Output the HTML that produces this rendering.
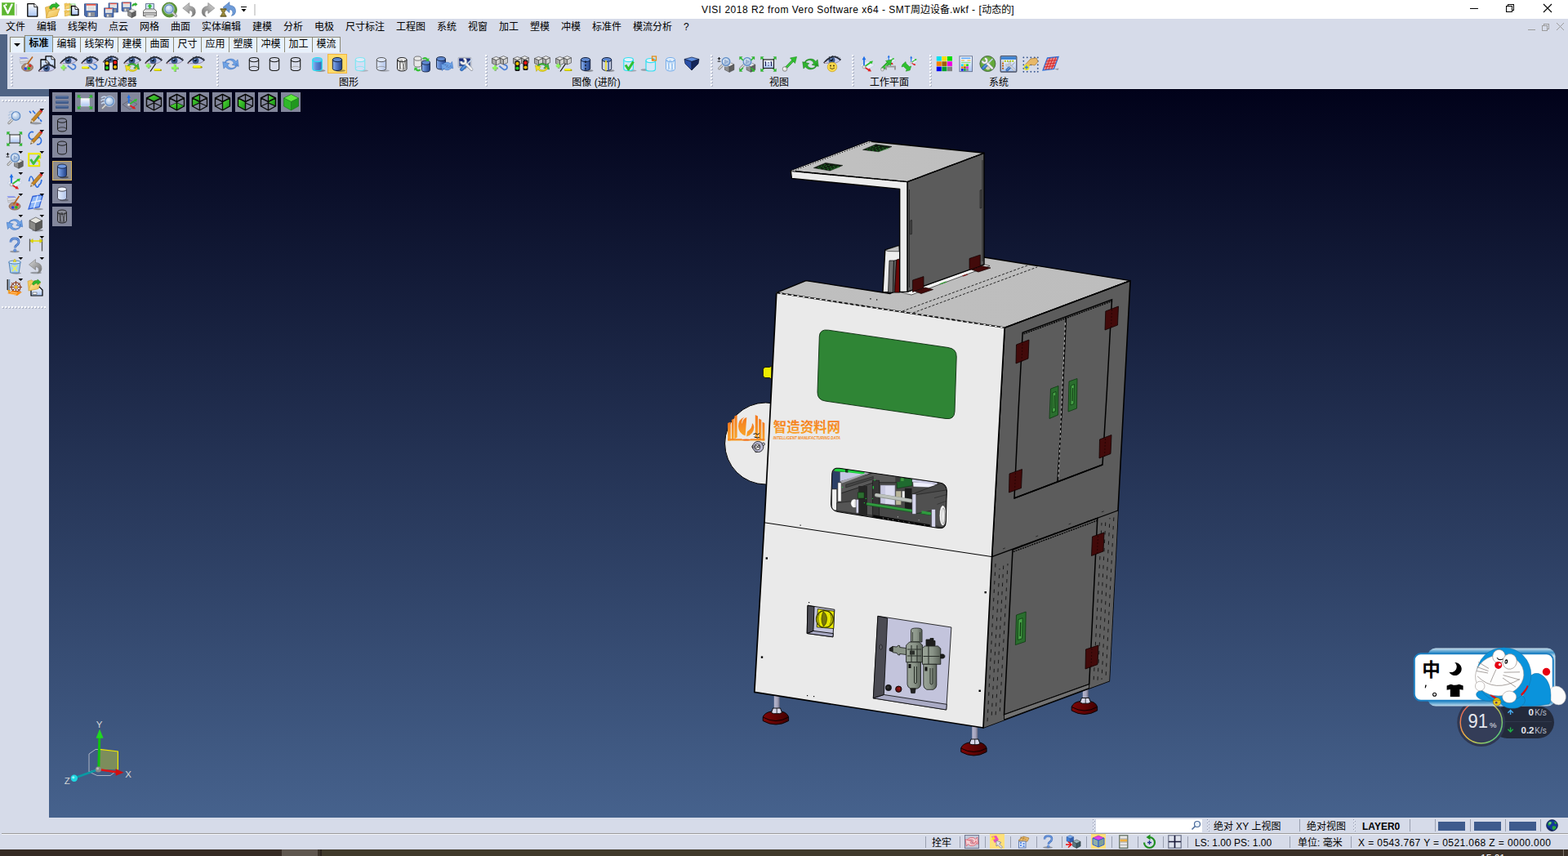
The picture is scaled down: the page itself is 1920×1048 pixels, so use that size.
<!DOCTYPE html><html><head><meta charset="utf-8"><title>VISI 2018 R2</title><style>
*{margin:0;padding:0;box-sizing:border-box}
html,body{width:1920px;height:1048px;overflow:hidden;background:#d6dbe9}
body{position:relative;font-family:"Liberation Sans","Noto Sans CJK SC",sans-serif;font-size:12px;color:#000}
.a{position:absolute}
.t{position:absolute;white-space:nowrap;line-height:14px;height:14px}
.c{text-align:center}
.k{display:inline-block;position:relative;vertical-align:top;white-space:nowrap}
svg{position:absolute;overflow:visible}
.grip{position:absolute;width:3px;background:repeating-linear-gradient(to bottom,#fff 0,#fff 2px,transparent 2px,transparent 4px) 0 0/2px 100% no-repeat,repeating-linear-gradient(to bottom,#aeb4c6 0,#aeb4c6 2px,transparent 2px,transparent 4px) 1px 1px/2px 100% no-repeat}
.gripH{position:absolute;height:3px;background:repeating-linear-gradient(to right,#fff 0,#fff 2px,transparent 2px,transparent 4px) 0 0/100% 2px no-repeat,repeating-linear-gradient(to right,#aeb4c6 0,#aeb4c6 2px,transparent 2px,transparent 4px) 1px 1px/100% 2px no-repeat}
.grip2{position:absolute;width:4px;background:repeating-linear-gradient(to bottom,#959bb0 0,#959bb0 1px,transparent 1px,transparent 4px) 0 0/1px 100% no-repeat,repeating-linear-gradient(to bottom,#959bb0 0,#959bb0 1px,transparent 1px,transparent 4px) 2px 2px/1px 100% no-repeat,repeating-linear-gradient(to bottom,#eef1f8 0,#eef1f8 1px,transparent 1px,transparent 4px) 1px 1px/1px 100% no-repeat}
.tab{position:absolute;top:45px;height:19px;background:#e8f1fc;border:1px solid #8b8875;border-bottom:none;border-left:none;text-align:center;line-height:17px;white-space:nowrap}
.sep{position:absolute;width:1px;background:#9aa0b0}
.vb{position:absolute;width:24px;height:24px;background:#83879c}
</style></head><body>
<div class="a" style="left:0;top:0;width:1920px;height:23px;background:#fff"></div>
<div class="t" id="title" style="left:859px;top:5px;font-size:12px;letter-spacing:0.485px;line-height:15px;height:15px">VISI 2018 R2 from Vero Software x64 - SMT<span class="k" style="width:48px;height:15px;letter-spacing:0">周边设备</span>.wkf - [<span class="k" style="width:36px;height:15px;letter-spacing:0">动态的</span>]</div>
<svg style="left:1795px;top:0" width="125" height="23" viewBox="0 0 125 23"><g stroke="#000" stroke-width="1" fill="none" shape-rendering="crispEdges"><path d="M4.5 10.5h10"/><path d="M49.5 7.5h7v7h-7z M51.5 7.5v-2h7v7h-2" /></g><path d="M95 5l10 10M105 5l-10 10" stroke="#000" stroke-width="1.1" fill="none"/></svg>
<svg style="left:1868px;top:26" width="50" height="14" viewBox="0 0 50 14"><g stroke="#9b9b9b" stroke-width="1" fill="none"><path d="M2.5 10.5h9" shape-rendering="crispEdges"/><path d="M20.5 5.5h6v6h-6z M22.5 5.5v-2h6v6h-2" shape-rendering="crispEdges"/><path d="M38 2l9 9M47 2l-9 9"/></g></svg>
<div class="t" style="left:7px;top:26px"><span class="k" style="width:24px;height:14px">文件</span></div>
<div class="t" style="left:45px;top:26px"><span class="k" style="width:24px;height:14px">编辑</span></div>
<div class="t" style="left:83px;top:26px"><span class="k" style="width:36px;height:14px">线架构</span></div>
<div class="t" style="left:133px;top:26px"><span class="k" style="width:24px;height:14px">点云</span></div>
<div class="t" style="left:171px;top:26px"><span class="k" style="width:24px;height:14px">网格</span></div>
<div class="t" style="left:209px;top:26px"><span class="k" style="width:24px;height:14px">曲面</span></div>
<div class="t" style="left:247px;top:26px"><span class="k" style="width:48px;height:14px">实体编辑</span></div>
<div class="t" style="left:309px;top:26px"><span class="k" style="width:24px;height:14px">建模</span></div>
<div class="t" style="left:347px;top:26px"><span class="k" style="width:24px;height:14px">分析</span></div>
<div class="t" style="left:385px;top:26px"><span class="k" style="width:24px;height:14px">电极</span></div>
<div class="t" style="left:423px;top:26px"><span class="k" style="width:48px;height:14px">尺寸标注</span></div>
<div class="t" style="left:485px;top:26px"><span class="k" style="width:36px;height:14px">工程图</span></div>
<div class="t" style="left:535px;top:26px"><span class="k" style="width:24px;height:14px">系统</span></div>
<div class="t" style="left:573px;top:26px"><span class="k" style="width:24px;height:14px">视窗</span></div>
<div class="t" style="left:611px;top:26px"><span class="k" style="width:24px;height:14px">加工</span></div>
<div class="t" style="left:649px;top:26px"><span class="k" style="width:24px;height:14px">塑模</span></div>
<div class="t" style="left:687px;top:26px"><span class="k" style="width:24px;height:14px">冲模</span></div>
<div class="t" style="left:725px;top:26px"><span class="k" style="width:36px;height:14px">标准件</span></div>
<div class="t" style="left:775px;top:26px"><span class="k" style="width:48px;height:14px">模流分析</span></div>
<div class="t" style="left:837px;top:26px">?</div>
<div class="a" style="left:0;top:42px;width:9px;height:76px;background:#4f6384"></div>
<div class="a" style="left:0;top:109px;width:60px;height:9px;background:#4f6384"></div>
<div class="a" style="left:12px;top:64px;width:405px;height:1px;background:#e6eaf4"></div>
<div class="tab" style="left:12px;width:18px;border-left:1px solid #8b8875"><svg style="left:4px;top:7px" width="8" height="4"><path d="M0 0h8l-4 4z" fill="#000"/></svg></div>
<div class="tab" style="left:30px;width:35px;top:43px;height:21px;background:#b9d8f9;border-left:1px solid #8b8875;font-weight:bold;line-height:18px;z-index:2"><span class="k" style="width:24px;height:18px">标准</span></div>
<div class="tab" style="left:65px;width:34px"><span class="k" style="width:24px;height:17px">编辑</span></div>
<div class="tab" style="left:99px;width:46px"><span class="k" style="width:36px;height:17px">线架构</span></div>
<div class="tab" style="left:145px;width:34px"><span class="k" style="width:24px;height:17px">建模</span></div>
<div class="tab" style="left:179px;width:34px"><span class="k" style="width:24px;height:17px">曲面</span></div>
<div class="tab" style="left:213px;width:34px"><span class="k" style="width:24px;height:17px">尺寸</span></div>
<div class="tab" style="left:247px;width:34px"><span class="k" style="width:24px;height:17px">应用</span></div>
<div class="tab" style="left:281px;width:34px"><span class="k" style="width:24px;height:17px">塑膜</span></div>
<div class="tab" style="left:315px;width:34px"><span class="k" style="width:24px;height:17px">冲模</span></div>
<div class="tab" style="left:349px;width:34px"><span class="k" style="width:24px;height:17px">加工</span></div>
<div class="tab" style="left:383px;width:34px"><span class="k" style="width:24px;height:17px">模流</span></div>
<div class="a" style="left:9px;top:108px;width:1911px;height:1px;background:#e4e8f2"></div>
<div class="grip" style="left:13px;top:67px;height:39px"></div>
<div class="grip" style="left:265px;top:67px;height:39px"></div>
<div class="grip" style="left:594px;top:67px;height:39px"></div>
<div class="grip" style="left:870px;top:67px;height:39px"></div>
<div class="grip" style="left:1043px;top:67px;height:39px"></div>
<div class="grip" style="left:1138px;top:67px;height:39px"></div>
<div class="t c" style="left:76px;width:120px;top:94px"><span class="k" style="width:24px;height:14px">属性</span>/<span class="k" style="width:36px;height:14px">过滤器</span></div>
<div class="t c" style="left:367px;width:120px;top:94px"><span class="k" style="width:24px;height:14px">图形</span></div>
<div class="t c" style="left:670px;width:120px;top:94px"><span class="k" style="width:24px;height:14px">图像</span> (<span class="k" style="width:24px;height:14px">进阶</span>)</div>
<div class="t c" style="left:894px;width:120px;top:94px"><span class="k" style="width:24px;height:14px">视图</span></div>
<div class="t c" style="left:1029px;width:120px;top:94px"><span class="k" style="width:48px;height:14px">工作平面</span></div>
<div class="t c" style="left:1163px;width:120px;top:94px"><span class="k" style="width:24px;height:14px">系统</span></div>
<div class="a" style="left:401px;top:66px;width:24px;height:24px;background:#fddc6c;border:1px solid #f2b544"></div>
<div class="gripH" style="left:2px;top:122px;width:54px"></div>
<div class="gripH" style="left:2px;top:375px;width:54px"></div>
<div class="a" id="vp" style="left:60px;top:109px;width:1860px;height:892px;background:linear-gradient(to bottom,#01021a 0%,#46628d 100%)"></div>
<div class="vb" style="left:64px;top:113px"></div>
<div class="vb" style="left:92px;top:113px"></div>
<div class="vb" style="left:120px;top:113px"></div>
<div class="vb" style="left:148px;top:113px"></div>
<div class="vb" style="left:176px;top:113px"></div>
<div class="vb" style="left:204px;top:113px"></div>
<div class="vb" style="left:232px;top:113px"></div>
<div class="vb" style="left:260px;top:113px"></div>
<div class="vb" style="left:288px;top:113px"></div>
<div class="vb" style="left:316px;top:113px"></div>
<div class="vb" style="left:344px;top:113px"></div>
<div class="vb" style="left:64px;top:141px"></div>
<div class="vb" style="left:64px;top:169px"></div>
<div class="vb" style="left:64px;top:197px;border:1px solid #d9b45c;background:#8d8c8f"></div>
<div class="vb" style="left:64px;top:225px"></div>
<div class="vb" style="left:64px;top:253px"></div>
<svg id="machine" style="left:0;top:0" width="1920" height="1048" viewBox="0 0 1920 1048">
<defs>
<linearGradient id="gTop" gradientUnits="userSpaceOnUse" x1="950" y1="0" x2="1384" y2="0"><stop offset="0" stop-color="#bfbfbf"/><stop offset="1" stop-color="#bdbdbd"/></linearGradient>
<linearGradient id="gHood" gradientUnits="userSpaceOnUse" x1="968" y1="0" x2="1205" y2="0"><stop offset="0" stop-color="#c1c1c1"/><stop offset="1" stop-color="#bebebe"/></linearGradient>
<clipPath id="cpLowWin"><path d="M1028 573.3 L1150.5 590.9 Q1159.4 592.2 1159.3 601 L1158.2 639.5 Q1158 648 1149 646.5 L1026 626.6 Q1017.4 625.2 1017.6 617 L1018.8 580 Q1018.9 572 1028 573.3Z"/></clipPath>
</defs>
<!-- feet -->
<defs><linearGradient id="gFootR" x1="0" y1="0" x2="1" y2="0"><stop offset="0" stop-color="#7e0606"/><stop offset="1" stop-color="#430000"/></linearGradient><linearGradient id="gPost" x1="0" y1="0" x2="1" y2="0"><stop offset="0" stop-color="#b6b6ce"/><stop offset="0.6" stop-color="#a4a4bc"/><stop offset="1" stop-color="#6e6e84"/></linearGradient></defs>
<g stroke="#000" stroke-width="0.9" stroke-linejoin="round">
<g id="foot"><rect x="947.800" y="848" width="6.800" height="20" fill="url(#gPost)" stroke="none"/>
<path d="M934.200 878 Q936 872.500 944.500 871 L957 871 Q964 872.500 965.600 878 L965.600 882.500 Q950 891.500 934.200 882.500Z" fill="url(#gFootR)"/>
<path d="M934.200 878 Q950 887 965.600 878" fill="none"/>
<path d="M944.500 872.500 l2 -5.500 h9 l2 5.500 l-3 1.200 h-7z" fill="#d6d6e8"/><path d="M951.200 867 v6.500" fill="none" stroke-width="0.700"/></g>
<use href="#foot" x="242.500" y="38"/>
<use href="#foot" x="378" y="-12.500"/>
</g>
<g stroke="#000" stroke-width="1.3" stroke-linejoin="round">
<!-- disc + knob behind front face -->
<circle cx="937.6" cy="543" r="50" fill="#eaeaea" stroke="#000" stroke-width="1"/>
<path d="M937 449.500 L942.500 449.500 L944.800 448 L944.800 464.500 L942.500 462.500 L937 462.500 Q934.400 462 934.400 459.500 L934.400 452.500 Q934.400 450 937 449.500Z" fill="#ecec00" stroke="#000" stroke-width="0.800"/>
<!-- main body top face -->
<path d="M950.8 358.3 L987 343.7 L1090 359.5 L1111 350 L1205 315 L1384 343.7 L1230.2 401.2Z" fill="url(#gTop)"/>
<!-- dashed lines on top face -->
<g fill="none" stroke-dasharray="3 2" stroke-width="0.8"><path d="M1105 381 L1258 325"/><path d="M1118 383 L1270 327"/></g>
<!-- right side -->
<path d="M1230.2 401.2 L1384 343.7 L1369 625 L1358.3 833.7 L1204 891 L1214.6 681.6Z" fill="#5c5c5c" stroke-width="1.6"/>
<!-- perforated strips lower side -->
<path d="M1214.6 681.6 L1240 673 L1229.5 881.5 L1204 891Z" fill="#5f5f5f" stroke="none"/>
<path d="M1343.8 634.3 L1369 625 L1358.3 833.7 L1333.7 842.8Z" fill="#5f5f5f" stroke="none"/>
<path d="M1214.6 681.6 L1369 625" fill="none"/>
<!-- front face -->
<path d="M950.8 358.3 L1230.2 401.2 L1214.6 681.6 L1204 891 L923.8 847.4 L936 639.8Z" fill="#eaeaea" stroke-width="1.7"/>
<path d="M936 639.8 L1214.6 681.6" fill="none" stroke-width="1"/>
</g>

<g fill="none" stroke-width="1.300"><path d="M950.8 358.3 L1230.2 401.2" stroke="#fff"/><path d="M950.8 358.3 L1230.2 401.2" stroke="#000" stroke-dasharray="4.500 2.500"/><path d="M1230.2 401.2 L1384 343.7" stroke="#000" stroke-dasharray="2 1" stroke-width="1.500"/></g>
<!-- perforation dashes -->
<g stroke="#0c0c0c" stroke-width="0.850" fill="none" stroke-dasharray="4.500 6">
<path d="M1219 690 L1209 884"/><path d="M1224 696 L1214 880" stroke-dashoffset="3"/><path d="M1229 688 L1219 878" stroke-dashoffset="6"/><path d="M1234 690 L1224 876" stroke-dashoffset="2"/>
<path d="M1349 640 L1339 836" stroke-dashoffset="1"/><path d="M1354 634 L1344 834" stroke-dashoffset="5"/><path d="M1359 634 L1349 832" stroke-dashoffset="3"/><path d="M1364 630 L1354 830" stroke-dashoffset="7"/>
</g>
<g stroke="#1a1a1a" stroke-width="0.8" fill="none" stroke-dasharray="3 40"><path d="M1228 672 L1362 622"/><path d="M1228 676 L1362 627" stroke-dashoffset="20"/></g>

<!-- upper door outlines on side -->
<g stroke="#000" stroke-width="1.500" fill="none">
<path d="M1242 610 L1247.2 500 L1252.2 407.3 L1361.5 366.8 L1355.3 480 L1350 569 Z"/>
<path d="M1305.4 388.2 L1300.4 500 L1295 589"/>
<path d="M1242 610 L1350 569" stroke-width="1.6"/>
<path d="M1253.5 408.8 L1362 368.5" stroke-width="1.4" stroke-dasharray="2 1"/>
<!-- lower door -->
<path d="M1240 673 L1343.8 634.3 L1333.7 837.7 L1229.5 875Z"/>
<path d="M1240.8 675.5 L1343 637.5" stroke-dasharray="2 1" stroke-width="1.3"/>
</g>
<path d="M1229.5 875 L1333.7 837.7 L1333.5 842.5 L1229.6 881Z" fill="#727272" stroke="#000" stroke-width="0.9"/>
<g stroke="#e8e8e8" stroke-width="0.8" fill="none" stroke-dasharray="3 3"><path d="M1304.4 395 L1296 585"/></g>

<!-- hinges (dark red) -->
<g fill="#420a0a" stroke="#100000" stroke-width="0.8">
<path d="M1244.5 422 L1260 416 L1259 439 L1244 445Z"/><path d="M1353.8 381 L1369.5 375 L1368.5 398 L1353 404Z"/>
<path d="M1236 580 L1251.5 574.5 L1250.5 597.5 L1235.5 603Z"/><path d="M1346.5 538 L1361 532.5 L1360 555.5 L1346 561Z"/>
<path d="M1337.5 657 L1352 652 L1351 675 L1336.5 680.5Z"/><path d="M1329.5 795 L1345 790 L1344 813.5 L1329 819Z"/>
</g>
<g stroke="#1a0000" stroke-width="0.7" fill="none" stroke-dasharray="2 2"><path d="M1252 421 l-1 22"/><path d="M1361.5 379 l-1 22"/><path d="M1243.5 579 l-1 22"/><path d="M1353.5 537 l-1 22"/><path d="M1344.5 656 l-1 22"/><path d="M1337 794 l-1 22"/></g>

<!-- green handles -->
<g stroke="#0c3a10" stroke-width="0.8">
<path d="M1286.5 476 L1296 472.5 L1295.5 508 L1285 512.5Z" fill="#2a6e2e"/><path d="M1289 481 l4 -1.5 l-0.6 24 l-4 1.5z" fill="#46a046"/><path d="M1290.5 484 l1.2 0 l-0.5 16 l-1.2 0z" fill="#123a14" stroke="none"/>
<path d="M1309 467 L1319 463.5 L1318.5 500 L1308 504Z" fill="#2a6e2e"/><path d="M1311.5 472 l4 -1.5 l-0.6 24 l-4 1.5z" fill="#46a046"/><path d="M1313 475 l1.2 0 l-0.5 16 l-1.2 0z" fill="#123a14" stroke="none"/>
<path d="M1244.5 753 L1256.2 749 L1255.5 785.5 L1243.4 789.6Z" fill="#2a6e2e"/><path d="M1247 758.5 l5.2 -1.8 l-0.6 25 l-5.2 1.8z" fill="#46a046"/><path d="M1249 762 l1.4 0 l-0.5 17 l-1.4 0z" fill="#123a14" stroke="none"/>
</g>

<!-- hood -->
<g stroke="#000" stroke-width="1.4" stroke-linejoin="round">
<!-- small white box behind post -->
<path d="M1083.8 306 L1100.6 301 L1102 301 L1102 357.6 L1081 357.6Z" fill="#ececec"/>
<path d="M1083.800 306.300 L1100.600 300.800 L1101 307.800 L1087.500 307.600Z" fill="#c2c2c2" stroke-width="0.600"/>
<path d="M1089 319 L1094.500 319 L1093.500 358 L1087.500 358Z" fill="#6e6e6e" stroke-width="0.700"/>
<path d="M1094.500 319 L1097.800 318.500 L1095.500 358 L1093.500 358Z" fill="#5c5c5c" stroke-width="0.700"/>
<path d="M1097.800 318 L1101.700 317 L1101.700 358 L1095.500 358Z" fill="#6a0707" stroke-width="0.700"/>
<!-- white base under hood -->
<path d="M1101 357.4 L1111 357.4 L1205 323.8 L1212 325.5 L1116 361Z" fill="#f4f4f4" stroke-width="0.6"/>
<path d="M1150 347.5 l8 -3 l2 0.8 l-8 3z" fill="#3c9a3c" stroke="none"/>
<path d="M1178 337.6 l6 -2.2 l1.5 0.8 l-6 2.2z" fill="#7a1414" stroke="none"/>
<!-- right panel -->
<path d="M1111 222.6 L1205 187.3 L1205 323.8 L1111 357.4Z" fill="#5b5b5b"/>
<!-- top plate -->
<path d="M968.3 209.3 L1063.9 173 L1205 187.3 L1111 222.6Z" fill="url(#gHood)"/>
<!-- front lip + post -->
<path d="M968.3 209.3 L1111 222.6 L1111 357.4 L1101.7 357.4 L1101.7 231.4 L969.4 218.4Z" fill="#ececec"/>
</g>
<g stroke="#000" stroke-width="1.3" stroke-dasharray="2 1.2" fill="none"><path d="M968.3 209.3 L1063.9 173"/><path d="M1111 222.6 L1205 187.3"/><path d="M968.3 209.3 L1111 222.6" stroke-width="1"/></g>
<g stroke="#1c1c1c" stroke-width="0.8" fill="none"><path d="M1113.5 232 L1113.5 352"/><path d="M1203 196 L1203 320"/><path d="M1114.8 270 l1.6 -0.5 l0 17 l-1.6 0.5z"/><path d="M1200.2 233 l1.6 -0.5 l0 22 l-1.6 0.5z"/></g>
<!-- hood hinges -->
<g fill="#420a0a" stroke="#100000" stroke-width="0.7">
<path d="M1117.5 343 L1131 338.5 L1131 352.5 L1117.5 357.5Z"/><path d="M1120 356.5 L1133 352 L1142.5 354.5 L1128 359.5Z"/>
<path d="M1187 316.5 L1200.3 312 L1200.3 326 L1187 330.5Z"/><path d="M1189.5 330 L1202.5 325.5 L1213 328 L1198 333Z"/>
</g>
<!-- green vents on hood top -->
<path d="M968.300 209.300 L1063.900 173 L1067.500 173.400 L972.500 209.800Z" fill="#e6e6e6"/>
<path d="M970.800 209.500 L1066 173.500" fill="none" stroke="#111" stroke-width="1" stroke-dasharray="1.800 1.400"/>
<g fill="#0e1a0e" stroke="#050a05" stroke-width="0.500">
<path d="M996.300 205.600 L1010.800 199.400 L1031.900 202.500 L1016.300 209.100Z"/><path d="M1056.500 183.400 L1072.500 176.700 L1092 179.500 L1075.600 185.700Z"/>
</g>
<g stroke="#2a9a30" stroke-width="0.700" fill="none" stroke-dasharray="2.600 1.400">
<path d="M1001 205.300 L1011 201.400"/><path d="M1003 206.600 L1016 201.800"/><path d="M1008 207.200 L1024 202.600"/><path d="M1013 207.800 L1028 203.400"/><path d="M1017 208 L1029 204.300" stroke-dasharray="1.500 1"/>
<path d="M1061 183 L1072 178.600"/><path d="M1063.500 184.200 L1077 179.200"/><path d="M1068 184.700 L1084 180"/><path d="M1073 185.200 L1088 180.700"/><path d="M1077 185.200 L1089.500 181.500" stroke-dasharray="1.500 1"/>
</g>
<!-- front details -->
<path d="M1014.5 404.2 L1161 425.5 Q1171.6 427 1171.2 437 L1169 504 Q1168.5 514 1158 512.5 L1011 491.1 Q1000.6 489.6 1001 480 L1003.3 412 Q1003.7 402.6 1014.5 404.2Z" fill="#2f8535" stroke="#0a2a0c" stroke-width="0.9"/>
<!-- lower window with mechanism -->
<g clip-path="url(#cpLowWin)"><g transform="translate(1010 565) scale(0.08591)" stroke-linejoin="round">
<rect x="0" y="0" width="1863" height="1048" fill="#484848"/>
<path d="M215 150 L620 150 L620 190 L340 290 L215 290Z" fill="#c5c8e4"/>
<path d="M100 140 L215 150 L215 390 L100 390Z" fill="#2b3f66"/>
<path d="M130 112 L200 82 L565 140 L565 182 L470 172 L300 150 L140 138Z" fill="#1fd040"/><path d="M290 112 l40 6 l0 42 l-40 -6z" fill="#123a18"/>
<path d="M225 285 L700 160 L1015 205 L1015 300 L700 300 L225 455Z" fill="#595959" stroke="#111" stroke-width="8"/>
<path d="M222 282 L620 150 L660 156 L240 312Z" fill="#a4a4ac"/>
<path d="M300 330 L690 215 L690 250 L300 372Z" fill="#444" stroke="#111" stroke-width="5"/>
<rect x="185" y="300" width="50" height="270" fill="#fafafa" stroke="#222" stroke-width="6"/>
<path d="M100 395 h70 v300 h-40 q-30 -10 -30 -50z" fill="#efefef" stroke="#222" stroke-width="6"/>
<path d="M170 590 L450 560 L690 640 L690 770 L450 740 L170 700Z" fill="#555" stroke="#111" stroke-width="6"/>
<ellipse cx="420" cy="597" rx="50" ry="62" fill="#fdfdfd" stroke="#333" stroke-width="5"/><ellipse cx="440" cy="600" rx="26" ry="50" fill="#cfcfcf" opacity="0.500"/>
<rect x="445" y="540" width="52" height="195" fill="#d2d2ea" stroke="#222" stroke-width="5"/>
<path d="M480 350 h125 v420 h-125z" fill="#262626"/><path d="M470 440 h90 v85 h-90z" fill="#2c6e30" stroke="#0c2a0e" stroke-width="6"/>
<path d="M680 270 h95 v520 h-95z" fill="#353535" stroke="#0a0a0a" stroke-width="6"/>
<path d="M690 350 v40 M705 270 l15 -8" stroke="#1fe040" stroke-width="12"/><circle cx="585" cy="528" r="8" fill="#1fe040"/><circle cx="563" cy="590" r="7" fill="#1fe040"/><circle cx="680" cy="528" r="7" fill="#1fe040"/><circle cx="250" cy="368" r="7" fill="#1fe040"/>
<path d="M790 335 L1005 335 L1005 625 L790 600Z" fill="#c9c9e2" stroke="#222" stroke-width="5"/><path d="M862 350 h125 v255 h-125z" fill="#dcdcf0"/>
<path d="M1010 420 h80 v200 h-80z" fill="#b9b59c" stroke="#333" stroke-width="5"/>
<path d="M1020 230 L1245 245 L1245 345 L1030 385Z" fill="#1f6a2f" stroke="#0c2a0e" stroke-width="6"/><path d="M1085 235 h40 v45 h-40z" fill="#3f9a3f"/><path d="M1010 220 h60 v70 h-60z" fill="#3a3a3a"/>
<path d="M1255 290 L1500 300 L1600 340 L1480 370 L1260 360Z" fill="#eeeefc" stroke="#222" stroke-width="5"/>
<path d="M1245 250 L1600 300 L1600 330 L1245 290Z" fill="#c9c9e2"/>
<rect x="1100" y="420" width="42" height="150" fill="#fafafa" stroke="#222" stroke-width="5"/>
<path d="M1140 380 h100 v300 h-100z" fill="#1c1c1c"/>
<path d="M735 480 L1225 560" stroke="#8e948e" stroke-width="54" stroke-linecap="round"/><path d="M735 476 L1225 556" stroke="#bcc1bc" stroke-width="38" stroke-linecap="round"/>
<path d="M610 606 L1500 746" stroke="#1d5f28" stroke-width="44" stroke-linecap="round"/><path d="M610 602 L1500 742" stroke="#329c40" stroke-width="30" stroke-linecap="round"/>
<path d="M1250 465 L1665 305 L1745 395 L1745 430 L1300 490Z" fill="#474747" stroke="#111" stroke-width="6"/>
<path d="M1290 475 L1745 405 L1745 850 L1680 940 L1570 915 L1575 690 L1290 745Z" fill="#505050" stroke="#111" stroke-width="6"/>
<path d="M1560 520 L1745 470 M1600 610 L1745 560" stroke="#2a2a2a" stroke-width="8" fill="none"/>
<rect x="1245" y="465" width="56" height="285" fill="#d4d4ec" stroke="#222" stroke-width="5"/>
<rect x="1520" y="680" width="58" height="260" fill="#d4d4ec" stroke="#222" stroke-width="5"/>
<path d="M690 760 L1500 900 L1500 975 L690 815Z" fill="#0a0a0a"/>
<g fill="#e8e8e8"><circle cx="830" cy="805" r="6"/><circle cx="900" cy="820" r="6"/><circle cx="970" cy="833" r="6"/><circle cx="1050" cy="848" r="6"/><circle cx="1120" cy="862" r="6"/><circle cx="1200" cy="868" r="6"/><circle cx="1270" cy="885" r="6"/><circle cx="1340" cy="835" r="6"/><circle cx="1420" cy="905" r="6"/><circle cx="1040" cy="790" r="6"/></g>
<ellipse cx="1682" cy="770" rx="50" ry="145" fill="#f6f6f6" stroke="#222" stroke-width="6"/><ellipse cx="1690" cy="775" rx="26" ry="112" fill="#b8b8b8" stroke="#555" stroke-width="4"/><ellipse cx="1684" cy="775" rx="16" ry="100" fill="#f0f0f0"/>
<path d="M1380 700 L1500 722 L1500 760 L1380 738Z" fill="#2f9a3f"/>
</g></g>
<path d="M1028 573.3 L1150.5 590.9 Q1159.4 592.2 1159.3 601 L1158.2 639.5 Q1158 648 1149 646.5 L1026 626.6 Q1017.4 625.2 1017.6 617 L1018.8 580 Q1018.9 572 1028 573.3Z" fill="none" stroke="#000" stroke-width="1"/>

<!-- yellow switch box -->
<g stroke="#000" stroke-width="0.9" stroke-linejoin="round">
<path d="M989 741.200 L1021.900 746.300 L1019.900 779.800 L988.200 775.500Z" fill="#c3c4dc"/>
<path d="M995.900 772.400 L1020.300 775.600 L1019.900 779.800 L988.200 775.500Z" fill="#a9aac4"/>
<path d="M989 741.200 L997 742.900 L995.900 772.400 L988.200 775.500Z" fill="#4b4b53"/>
<path d="M1001.300 745.500 L1021.400 748.300 L1020.800 769.600 L1000.200 767.800Z" fill="#eeee00" stroke-width="0.700"/>
<circle cx="1009.900" cy="758" r="10.400" fill="#e6e600" stroke="#3c3c00" stroke-width="1.300"/>
<path d="M1008 749 Q1012 751 1012.500 757.500 Q1012.500 764 1008.500 767 Q1005.500 762 1006 757 Q1006.500 752 1008 749Z" fill="#77770a" stroke="#3c3c00" stroke-width="0.700"/>
<path d="M1003 751.500 q-3 6.500 0.500 13 M1016.500 751 q3.500 7 -0.500 14" fill="none" stroke="#55550a" stroke-width="0.900"/>
</g>
<!-- pneumatic panel -->
<defs><linearGradient id="gFR" x1="0" y1="0" x2="1" y2="0"><stop offset="0" stop-color="#9aa498"/><stop offset="0.55" stop-color="#8a9488"/><stop offset="1" stop-color="#596158"/></linearGradient></defs>
<g stroke="#000" stroke-width="0.8" stroke-linejoin="round">
<path d="M1074.900 754.300 L1164.900 768 L1158.700 869 L1069.300 854.800Z" fill="#c3c4dc"/>
<path d="M1082.300 850.500 L1159.300 862.300 L1158.700 869 L1069.300 854.800Z" fill="#a9aac4"/>
<path d="M1074.900 754.300 L1086.700 756.800 L1082.300 850.500 L1069.300 854.800Z" fill="#4b4b53"/>
<ellipse cx="1078.600" cy="792.200" rx="1.500" ry="3" fill="#6a6a72" stroke-width="0.600"/>
</g>
<g stroke="#121412" stroke-width="0.800" stroke-linejoin="round">
<path d="M1089.200 794 l4 -2.500 l5 0.500 l1.500 -1.800 l2 0.300 l0 2 l8 1 l0 8 l-8 -1 l0 1.500 l-2 -0.300 l-1.500 -2.200 l-5 -0.800z" fill="#8a9488"/><path d="M1089.200 794 l4 -2.500 l0 6.200 l-4 -1z" fill="#222"/>
<path d="M1115.500 771.500 q0 -2.500 6.700 -2.500 q6.800 0 6.800 2.500 v14.500 h-13.500z" fill="url(#gFR)"/><path d="M1117.500 774 v11 M1126.500 774 v11" stroke="#3a403a" stroke-width="1" fill="none"/>
<path d="M1109.600 790 l4 -4 h12 l4 4 v20.800 h-20z" fill="url(#gFR)"/>
<path d="M1111 795 h17 M1111 803 h17 M1116 790 v20 M1123 790 v20" stroke="#2a302a" stroke-width="1.100" fill="none"/><rect x="1114" y="796.500" width="6" height="5" fill="#2a2e2a" stroke="none"/>
<path d="M1111 810.800 h16.500 v27 q0 3.500 -4 5.200 h-8.500 q-4 -1.700 -4 -5.200z" fill="url(#gFR)"/>
<path d="M1119.500 816 v20 q1.500 2 3 0 v-20" fill="none" stroke="#2a302a" stroke-width="1"/><path d="M1112.500 813 h3 v5 h-3z" fill="#111" stroke="none"/>
<path d="M1114.800 843 h6.400 l-1 5.600 h-4.400z" fill="#222"/>
<path d="M1134 783 h5 v-1.500 h4 v3 h2 v6 h-11z" fill="#1e1e1e"/>
<path d="M1129.500 793.500 l3 -2.500 h16 l3.300 3 v19.300 h-22.300z" fill="url(#gFR)"/>
<path d="M1130.500 803.500 h20 M1137 791 v22" stroke="#2a302a" stroke-width="1.100" fill="none"/>
<path d="M1130.800 813.300 h16 v25.500 q0 3.500 -4 5.500 h-8 q-4 -2 -4 -5.500z" fill="url(#gFR)"/>
<path d="M1139 818 v19 q1.500 2 3 0 v-19" fill="none" stroke="#2a302a" stroke-width="1"/><path d="M1132.500 816.500 h3 v5 h-3z" fill="#111" stroke="none"/>
<path d="M1151.800 801 h3.500 l1.500 1.500 v2 l-1.500 1.500 h-3.500z" fill="#1c1c1c"/>
</g>
<circle cx="1087.900" cy="842" r="3.700" fill="#1a1a1a" stroke="#000" stroke-width="0.500"/><circle cx="1087.200" cy="841.500" r="1.600" fill="#333"/>
<circle cx="1100.300" cy="843.700" r="3.700" fill="#6a1010" stroke="#000" stroke-width="0.900"/><path d="M1098.500 843 l3.500 -0.800 l-1.500 3" stroke="#c02020" stroke-width="0.700" fill="none"/>
<!-- small dots on front -->
<g fill="#000"><rect x="937.600" y="682.300" width="2.400" height="2.400"/><rect x="1205.500" y="724" width="2.400" height="2.400"/><rect x="931.800" y="803.400" width="2.400" height="2.400"/><rect x="1198.500" y="844.600" width="2.400" height="2.400"/><rect x="1065.300" y="365.200" width="1.300" height="1.300"/><rect x="1073" y="366.300" width="1.300" height="1.300"/><rect x="979.500" y="642.500" width="1.200" height="1.200"/><rect x="990" y="737" width="1.200" height="1.200"/><rect x="988" y="851" width="1.200" height="1.200"/><rect x="996" y="852" width="1.200" height="1.200"/></g>

<!-- logo -->
<defs><linearGradient id="gLogo" x1="0" y1="0" x2="0" y2="1"><stop offset="0" stop-color="#f47920"/><stop offset="1" stop-color="#f9a326"/></linearGradient></defs>
<g fill="url(#gLogo)">
<path d="M891.100 518 L894.700 516.500 V539.600 H891.100Z"/><path d="M895.900 514 L898.600 512.500 V538 L895.900 539Z"/><path d="M899.400 509.500 L902.600 508 V535.500 L899.400 537.500Z"/>
<path d="M924.800 508 L928 509.500 V537.500 L924.800 535.500Z"/><path d="M929.100 512.500 L932.300 514 V539 L929.100 538Z"/><path d="M933.500 516.500 L936.300 518 V539.600 H933.500Z"/>
<path d="M891 537.300 L908 537.300 L910 538.200 H917.400 L919.400 537.300 H936.300 V539.600 H891Z"/>
<path d="M912 510.500 q-8 2.500 -8 11.500 q0.300 8.500 8.600 11.500 l1.700 -22.500 q-5 1.500 -5.500 8 q-1.800 -5 3.200 -8.500z"/>
<path d="M914 534.500 q9 -2.500 9.300 -11.500 q-0.300 -3.500 -2.300 -5 q0.300 6.500 -6 10.500z"/>
</g>
<ellipse cx="913.700" cy="538.500" rx="4.600" ry="1.100" fill="#f26a1b"/>
<text x="946.8" y="528.9" font-family="Liberation Sans, Noto Sans CJK SC, sans-serif" font-size="16.5" font-weight="bold" fill="url(#gLogo)" textLength="82.2" lengthAdjust="spacingAndGlyphs">智造资料网</text>
<text x="946.800" y="537.700" font-family="Liberation Sans, sans-serif" font-size="4.800" font-weight="bold" font-style="italic" fill="#f58a22" textLength="82.200" lengthAdjust="spacingAndGlyphs">INTELLIGENT MANUFACTURING DATA</text>
<path d="M922.500 531.500 l3 -0.800 l2 1.500 l2.500 -1.800 M923.500 535 l4 1 l2.500 -0.500" fill="none" stroke="#111" stroke-width="1"/>
<!-- bolt -->
<g stroke="#111" stroke-width="0.8"><circle cx="928.300" cy="547" r="6.600" fill="#b9b9d2"/><path d="M921.700 545 l-1 2 l1.200 2 M924 552.500 l1.500 1.200 l2 -0.600" fill="none"/><circle cx="927.300" cy="547.200" r="3.600" fill="#f6f6f6"/><circle cx="926" cy="547.200" r="1.500" fill="#fff"/><circle cx="929" cy="546.600" r="1.200" fill="#e0e0ea"/><circle cx="934.800" cy="543.700" r="1.600" fill="#c9c9dc"/></g>

</svg>

<svg style="left:0;top:0" width="0" height="0"><defs>
<linearGradient id="gBlueV" x1="0" y1="0" x2="0" y2="1"><stop offset="0" stop-color="#ffffff"/><stop offset="1" stop-color="#a9c4f2"/></linearGradient>
<linearGradient id="gCylB" x1="0" y1="0" x2="1" y2="0"><stop offset="0" stop-color="#8fb2ea"/><stop offset="0.35" stop-color="#5d85cf"/><stop offset="1" stop-color="#1f3f86"/></linearGradient>
<linearGradient id="gCylC" x1="0" y1="0" x2="1" y2="0"><stop offset="0" stop-color="#8db8f2"/><stop offset="0.4" stop-color="#5a86d6"/><stop offset="1" stop-color="#3c62b0"/></linearGradient>
<linearGradient id="gCylL" x1="0" y1="0" x2="1" y2="0"><stop offset="0" stop-color="#e4ecfb"/><stop offset="1" stop-color="#b3c5ea"/></linearGradient>
<linearGradient id="gFold" x1="0" y1="0" x2="1" y2="1"><stop offset="0" stop-color="#fde9a6"/><stop offset="1" stop-color="#eeb93f"/></linearGradient>
<linearGradient id="gGreen" x1="0" y1="0" x2="1" y2="1"><stop offset="0" stop-color="#6fe24f"/><stop offset="1" stop-color="#1f8f1a"/></linearGradient>
<linearGradient id="gGray" x1="0" y1="0" x2="1" y2="1"><stop offset="0" stop-color="#d9d9d9"/><stop offset="1" stop-color="#6f6f6f"/></linearGradient>
<linearGradient id="gEye" x1="0" y1="0" x2="0" y2="1"><stop offset="0" stop-color="#2b3550"/><stop offset="0.55" stop-color="#5b6f9c"/><stop offset="1" stop-color="#c9d3ea"/></linearGradient>
<radialGradient id="gLens" cx="0.4" cy="0.35" r="0.7"><stop offset="0" stop-color="#eef5fd"/><stop offset="1" stop-color="#8fb0d8"/></radialGradient>
<linearGradient id="gPencil" x1="0" y1="0" x2="1" y2="1"><stop offset="0" stop-color="#e8a53a"/><stop offset="1" stop-color="#a86a10"/></linearGradient>
<linearGradient id="gGrnBtn" x1="0" y1="0" x2="1" y2="1"><stop offset="0" stop-color="#58e03a"/><stop offset="1" stop-color="#159015"/></linearGradient>
</defs></svg>
<svg style="left:2px;top:3px" width="16" height="16" viewBox="0 0 16 16"><rect width="16" height="16" fill="#5cb531"/><rect x="0.500" y="0.500" width="15" height="15" fill="none" stroke="#7cc955" stroke-width="1"/><path d="M3.200 4 L7.600 13 L12.600 2.600" stroke="#fff" stroke-width="2.300" fill="none" stroke-linejoin="round" stroke-linecap="round"/><circle cx="5.400" cy="2.700" r="1.200" fill="#fff"/></svg>
<svg style="left:19px;top:5px" width="2" height="14" viewBox="0 0 2 14"><rect x="0.500" width="1" height="14" fill="#b0b0b0"/></svg>
<svg style="left:33px;top:4px" width="14" height="17" viewBox="0 0 14 17"><path d="M0.8 0.6 h8 l4 4 v11.5 h-12 z" fill="url(#gBlueV)" stroke="#000" stroke-width="1.300" stroke-linejoin="round"/><path d="M8.8 0.6 v4 h4" fill="#fff" stroke="#000" stroke-width="0.8"/></svg>
<svg style="left:55px;top:3px" width="19" height="19" viewBox="0 0 19 19"><g transform="translate(0 3) scale(1)"><path d="M0.500 3 l5.500 -1.600 l1.400 1.600 l7 -1.200 l1 11 l-13.500 3z" fill="#f2c75a" stroke="#c9962a" stroke-width="0.6"/><path d="M1.500 16 l3 -8.500 l13.500 -2.800 l-3.400 9z" fill="url(#gFold)" stroke="#c9962a" stroke-width="0.6"/></g><g transform="translate(5.5 0.5) scale(0.95)"><path d="M0 7 q1 -6.500 8 -5.500 l0 -2.200 l5 4.200 l-5 4.200 l0 -2.400 q-4.500 -0.800 -5.500 3z" fill="#2db82d" stroke="#157a15" stroke-width="0.5"/></g></svg>
<svg style="left:78px;top:3px" width="20" height="19" viewBox="0 0 20 19"><g transform="translate(0.5 0) scale(0.52)"><path d="M0.500 3 l5.500 -1.600 l1.400 1.600 l7 -1.200 l1 11 l-13.500 3z" fill="#f2c75a" stroke="#c9962a" stroke-width="0.6"/><path d="M1.500 16 l3 -8.500 l13.500 -2.800 l-3.400 9z" fill="url(#gFold)" stroke="#c9962a" stroke-width="0.6"/></g><g transform="translate(0.5 8.5) scale(0.52)"><path d="M0.500 3 l5.500 -1.600 l1.400 1.600 l7 -1.200 l1 11 l-13.500 3z" fill="#f2c75a" stroke="#c9962a" stroke-width="0.6"/><path d="M1.500 16 l3 -8.500 l13.500 -2.800 l-3.400 9z" fill="url(#gFold)" stroke="#c9962a" stroke-width="0.6"/></g><rect x="8" y="2" width="6" height="14" fill="none" stroke="#6fd06f" stroke-width="0.8"/><path d="M9.5 4.5 h4.500 l4 4 v7 h-8.500 z" fill="url(#gBlueV)" stroke="#000" stroke-width="1.300" stroke-linejoin="round"/><path d="M14 4.500 v4 h4" fill="#fff" stroke="#000" stroke-width="0.8"/></svg>
<svg style="left:103px;top:4px" width="18" height="17" viewBox="0 0 18 17"><g transform="translate(0.5 0.3) scale(1)"><path d="M0 0.500 h16 v15.500 h-14.500 l-1.500 -1.500z" fill="#4a6db0" stroke="#2b4378" stroke-width="0.8"/><rect x="2.200" y="0.800" width="11.600" height="8" fill="#f4f4f4"/><rect x="2.200" y="0.800" width="11.600" height="1.600" fill="#e84a3a"/><path d="M3.500 4.200h9M3.500 6h9M3.500 7.700h9" stroke="#c4c4c4" stroke-width="0.7"/><rect x="3.600" y="10.600" width="9" height="5.200" fill="#8b8f98"/><rect x="5" y="11.400" width="2.400" height="3.800" fill="#e6e6e6"/></g></svg>
<svg style="left:127px;top:3px" width="19" height="19" viewBox="0 0 19 19"><g transform="translate(6 0.5) scale(0.72)"><path d="M0 0.500 h16 v15.500 h-14.500 l-1.500 -1.500z" fill="#4a6db0" stroke="#2b4378" stroke-width="0.8"/><rect x="2.200" y="0.800" width="11.600" height="8" fill="#f4f4f4"/><rect x="2.200" y="0.800" width="11.600" height="1.600" fill="#e84a3a"/><path d="M3.500 4.200h9M3.500 6h9M3.500 7.700h9" stroke="#c4c4c4" stroke-width="0.7"/><rect x="3.600" y="10.600" width="9" height="5.200" fill="#8b8f98"/><rect x="5" y="11.400" width="2.400" height="3.800" fill="#e6e6e6"/></g><g transform="translate(0.5 6.5) scale(0.72)"><path d="M0 0.500 h16 v15.500 h-14.500 l-1.500 -1.500z" fill="#4a6db0" stroke="#2b4378" stroke-width="0.8"/><rect x="2.200" y="0.800" width="11.600" height="8" fill="#f4f4f4"/><rect x="2.200" y="0.800" width="11.600" height="1.600" fill="#e84a3a"/><path d="M3.500 4.200h9M3.500 6h9M3.500 7.700h9" stroke="#c4c4c4" stroke-width="0.7"/><rect x="3.600" y="10.600" width="9" height="5.200" fill="#8b8f98"/><rect x="5" y="11.400" width="2.400" height="3.800" fill="#e6e6e6"/></g></svg>
<svg style="left:149px;top:2px" width="21" height="20" viewBox="0 0 21 20"><g transform="translate(0 0.5) scale(0.72)"><path d="M0 0.500 h16 v15.500 h-14.500 l-1.500 -1.500z" fill="#4a6db0" stroke="#2b4378" stroke-width="0.8"/><rect x="2.200" y="0.800" width="11.600" height="8" fill="#f4f4f4"/><rect x="2.200" y="0.800" width="11.600" height="1.600" fill="#e84a3a"/><path d="M3.500 4.200h9M3.500 6h9M3.500 7.700h9" stroke="#c4c4c4" stroke-width="0.7"/><rect x="3.600" y="10.600" width="9" height="5.200" fill="#8b8f98"/><rect x="5" y="11.400" width="2.400" height="3.800" fill="#e6e6e6"/></g><g transform="translate(7.5 9) scale(0.82)"><path d="M0 3 l6 -3 l6 3 l-6 3z" fill="#e4e4e4" stroke="#333" stroke-width="0.5"/><path d="M0 3 l6 3 v7 l-6 -3z" fill="#8f8f8f" stroke="#333" stroke-width="0.5"/><path d="M12 3 l-6 3 v7 l6 -3z" fill="#5f5f5f" stroke="#333" stroke-width="0.5"/></g><g transform="translate(12.5 1.5) scale(0.52)"><path d="M0 7 q1 -6.500 8 -5.500 l0 -2.200 l5 4.200 l-5 4.200 l0 -2.400 q-4.500 -0.800 -5.500 3z" fill="#2db82d" stroke="#157a15" stroke-width="0.5"/></g></svg>
<svg style="left:174px;top:3px" width="20" height="19" viewBox="0 0 20 19"><path d="M4.500 9 V1.500 h10 V9" fill="#cfe0f7" stroke="#4a5a78" stroke-width="0.8"/><path d="M9.500 1.800 l3 3.200 h-1.800 v2.500 h-2.400 v-2.500 h-1.800z" fill="#2fc02f"/><path d="M1.500 10.500 l2.500 -2.500 h11 l2.500 2.500 v6 h-16z" fill="#e2e2e2" stroke="#555" stroke-width="0.8"/><rect x="1.500" y="12.500" width="16" height="4" fill="#bdbdbd" stroke="#555" stroke-width="0.6"/><rect x="4" y="15.500" width="11" height="2.400" fill="#f8f8f8" stroke="#666" stroke-width="0.5"/></svg>
<svg style="left:198px;top:2px" width="20" height="20" viewBox="0 0 20 20"><circle cx="9.500" cy="10" r="9" fill="#5f9a3a"/><circle cx="9.500" cy="10" r="9" fill="none" stroke="#3f7422" stroke-width="0.8"/><path d="M12.9 12.9 l4.55 4.55" stroke="#8d8d8d" stroke-width="3.2" stroke-linecap="round"/><path d="M12.9 12.9 l4.55 4.55" stroke="#dcdcdc" stroke-width="1.4" stroke-linecap="round"/><circle cx="9" cy="9" r="5.2" fill="url(#gLens)" stroke="#5f8ac4" stroke-width="1.4"/><circle cx="9" cy="9" r="6.2" fill="none" stroke="#d6e2f2" stroke-width="0.7"/></svg>
<svg style="left:223px;top:3px" width="18" height="18" viewBox="0 0 18 18"><g transform="translate(0.8 0.5) scale(1 1)"><path d="M0 6.500 L8 0 L8 4 Q16 4.500 15.500 12 Q15 16 10.500 17 Q13 13.500 11.500 11 Q10.500 9 8 9 L8 13Z" fill="url(#gGray)" stroke="#7a7a7a" stroke-width="0.6"/></g></svg>
<svg style="left:246px;top:3px" width="18" height="18" viewBox="0 0 18 18"><g transform="translate(16.8 0.5) scale(-1 1)"><path d="M0 6.500 L8 0 L8 4 Q16 4.500 15.500 12 Q15 16 10.500 17 Q13 13.500 11.500 11 Q10.500 9 8 9 L8 13Z" fill="url(#gGray)" stroke="#7a7a7a" stroke-width="0.6"/></g></svg>
<svg style="left:269px;top:2px" width="21" height="20" viewBox="0 0 21 20"><g transform="translate(4 0.5) scale(1 1)"><path d="M0 6.500 L8 0 L8 4 Q16 4.500 15.500 12 Q15 16 10.500 17 Q13 13.500 11.500 11 Q10.500 9 8 9 L8 13Z" fill="#6e9bd8" stroke="#3f6fb0" stroke-width="0.6"/></g><path d="M1 9 h7 l-2.400 4.500 l2.400 4.500 h-7 l2.400 -4.500z" fill="#9a8a3a" stroke="#5f5520" stroke-width="0.7"/><path d="M0.500 9 h8 M0.500 18 h8" stroke="#5f5520" stroke-width="1.200"/></svg>
<svg style="left:295px;top:8px" width="8" height="8" viewBox="0 0 8 8"><path d="M0 0.500 h7" stroke="#000" stroke-width="1"/><path d="M0.500 3 h6 l-3 3.600z" fill="#000"/></svg>
<svg style="left:311px;top:5px" width="2" height="14" viewBox="0 0 2 14"><rect x="0.500" width="1" height="14" fill="#b0b0b0"/></svg>
<svg style="left:22px;top:68px" width="22" height="21" viewBox="0 0 22 21"><path d="M1.500 2 l9 0 l2.500 2 l-9.500 0.500z" fill="#8f9cf0"/><path d="M2 4.500 l10 -0.500 l1 2.400 l-10.500 0.800z" fill="#e8e8f0" stroke="#999" stroke-width="0.4"/><path d="M2.500 7.500 l10 -0.800 l0.500 2.400 l-10 1z" fill="#d0d0d8" stroke="#999" stroke-width="0.4"/><ellipse cx="11.500" cy="14.500" rx="7" ry="4.800" fill="#b08a72" stroke="#6a4a3a" stroke-width="0.6"/><circle cx="14.800" cy="12.600" r="1.700" fill="#e02020"/><circle cx="13.400" cy="15.800" r="1.700" fill="#20c020"/><circle cx="9.200" cy="16" r="1.700" fill="#2040f0"/><path d="M10 12.500 L18 1.500" stroke="#b8641a" stroke-width="1.600"/><path d="M9.200 13.800 l2.400 -3.200" stroke="#ddd" stroke-width="2"/></svg>
<svg style="left:47px;top:68px" width="22" height="21" viewBox="0 0 22 21"><path d="M9 0.800 h7 l4 4 v9.500 h-11 z" fill="#cfe0fb" stroke="#000" stroke-width="1.300" stroke-linejoin="round"/><path d="M16 0.800 v4 h4" fill="#fff" stroke="#000" stroke-width="0.8"/><path d="M3 5 h6 l4 4 v8 h-10 z" fill="#cfe0fb" stroke="#000" stroke-width="1.300" stroke-linejoin="round"/><path d="M9 5 v4 h4" fill="#fff" stroke="#000" stroke-width="0.8"/><g transform="translate(0.5 9.500) scale(1) translate(-0.1 1.1)"><path d="M0 8.600 Q4 3 10.500 0.800 Q16 0.600 20.300 5 Q17.500 7.200 16 7.900 Q13 8.800 11 8.700 Z" fill="#c3cbee"/><circle cx="9.600" cy="5.100" r="3.700" fill="#3d5d90"/><circle cx="9.600" cy="5.100" r="3.700" fill="none" stroke="#2a4270" stroke-width="0.500"/><circle cx="9.300" cy="4.700" r="1.700" fill="#0b1628"/><ellipse cx="8.700" cy="3.500" rx="1.100" ry="0.800" fill="#a6c6ff"/><path d="M0 8.600 L11 8.700 Q13 8.800 16 7.900 Q17.500 7.200 20.300 5" fill="none" stroke="#6a5a78" stroke-width="0.600"/><path d="M0 8.600 Q4 3 10.500 0.800 Q16 0.600 20.300 5" fill="none" stroke="#262b36" stroke-width="1.800"/><path d="M7 1.800 l-0.600 -1.300 M10.500 0.800 l0.100 -1.300 M13.500 0.900 l0.600 -1.200 M16.300 1.900 l0.900 -1.200 M18.400 3.200 l1.300 -0.900 M19.600 4.400 l1.300 -0.400" stroke="#262b36" stroke-width="0.900" fill="none"/><path d="M0 8.600 Q1.500 7 3.200 6.800 Q2.600 8.200 2.800 8.600Z" fill="#d9a3ad"/><circle cx="2.300" cy="7.900" r="0.600" fill="#fff"/></g></svg>
<svg style="left:73px;top:68px" width="22" height="21" viewBox="0 0 22 21"><g transform="translate(1 0) scale(1) translate(-0.1 1.1)"><path d="M0 8.600 Q4 3 10.500 0.800 Q16 0.600 20.300 5 Q17.500 7.200 16 7.900 Q13 8.800 11 8.700 Z" fill="#c3cbee"/><circle cx="9.600" cy="5.100" r="3.700" fill="#3d5d90"/><circle cx="9.600" cy="5.100" r="3.700" fill="none" stroke="#2a4270" stroke-width="0.500"/><circle cx="9.300" cy="4.700" r="1.700" fill="#0b1628"/><ellipse cx="8.700" cy="3.500" rx="1.100" ry="0.800" fill="#a6c6ff"/><path d="M0 8.600 L11 8.700 Q13 8.800 16 7.900 Q17.500 7.200 20.300 5" fill="none" stroke="#6a5a78" stroke-width="0.600"/><path d="M0 8.600 Q4 3 10.500 0.800 Q16 0.600 20.300 5" fill="none" stroke="#262b36" stroke-width="1.800"/><path d="M7 1.800 l-0.600 -1.300 M10.500 0.800 l0.100 -1.300 M13.500 0.900 l0.600 -1.200 M16.300 1.900 l0.900 -1.200 M18.400 3.200 l1.300 -0.900 M19.600 4.400 l1.300 -0.400" stroke="#262b36" stroke-width="0.900" fill="none"/><path d="M0 8.600 Q1.500 7 3.200 6.800 Q2.600 8.200 2.800 8.600Z" fill="#d9a3ad"/><circle cx="2.300" cy="7.900" r="0.600" fill="#fff"/></g><path d="M2 15.200h6.400M5.200 12v6.400" stroke="#6a7a6a" stroke-width="2.2" fill="none" opacity="0.700"/><path d="M1.300 14.500h6.400M4.500 11.300v6.400" stroke="#8cf85a" stroke-width="2.2" fill="none"/><path d="M15.500 11 a3 3 0 1 1 -0.500 5.400" stroke="#4a7fd4" stroke-width="1.800" fill="none"/><path d="M15.200 16.600 l-5.400 -4.400" stroke="#4a7fd4" stroke-width="1.800"/></svg>
<svg style="left:99px;top:68px" width="22" height="21" viewBox="0 0 22 21"><g transform="translate(1 0) scale(1) translate(-0.1 1.1)"><path d="M0 8.600 Q4 3 10.500 0.800 Q16 0.600 20.300 5 Q17.500 7.200 16 7.900 Q13 8.800 11 8.700 Z" fill="#c3cbee"/><circle cx="9.600" cy="5.100" r="3.700" fill="#3d5d90"/><circle cx="9.600" cy="5.100" r="3.700" fill="none" stroke="#2a4270" stroke-width="0.500"/><circle cx="9.300" cy="4.700" r="1.700" fill="#0b1628"/><ellipse cx="8.700" cy="3.500" rx="1.100" ry="0.800" fill="#a6c6ff"/><path d="M0 8.600 L11 8.700 Q13 8.800 16 7.900 Q17.500 7.200 20.300 5" fill="none" stroke="#6a5a78" stroke-width="0.600"/><path d="M0 8.600 Q4 3 10.500 0.800 Q16 0.600 20.300 5" fill="none" stroke="#262b36" stroke-width="1.800"/><path d="M7 1.800 l-0.600 -1.300 M10.500 0.800 l0.100 -1.300 M13.500 0.900 l0.600 -1.200 M16.300 1.900 l0.900 -1.200 M18.400 3.200 l1.300 -0.900 M19.600 4.400 l1.300 -0.400" stroke="#262b36" stroke-width="0.900" fill="none"/><path d="M0 8.600 Q1.500 7 3.200 6.800 Q2.600 8.200 2.800 8.600Z" fill="#d9a3ad"/><circle cx="2.300" cy="7.900" r="0.600" fill="#fff"/></g><path d="M2.200 15.200h7.200" stroke="#a8a000" stroke-width="2.2" fill="none" stroke-linecap="round"/><path d="M1.400 14.500h7.200" stroke="#f8f800" stroke-width="2.200" fill="none"/><path d="M15.500 11 a3 3 0 1 1 -0.500 5.400" stroke="#4a7fd4" stroke-width="1.800" fill="none"/><path d="M15.200 16.600 l-5.400 -4.400" stroke="#4a7fd4" stroke-width="1.800"/></svg>
<svg style="left:125px;top:68px" width="22" height="21" viewBox="0 0 22 21"><g transform="translate(1.5 -0.5) scale(0.9) translate(-0.1 1.1)"><path d="M0 8.600 Q4 3 10.500 0.800 Q16 0.600 20.300 5 Q17.500 7.200 16 7.900 Q13 8.800 11 8.700 Z" fill="#c3cbee"/><circle cx="9.600" cy="5.100" r="3.700" fill="#3d5d90"/><circle cx="9.600" cy="5.100" r="3.700" fill="none" stroke="#2a4270" stroke-width="0.500"/><circle cx="9.300" cy="4.700" r="1.700" fill="#0b1628"/><ellipse cx="8.700" cy="3.500" rx="1.100" ry="0.800" fill="#a6c6ff"/><path d="M0 8.600 L11 8.700 Q13 8.800 16 7.900 Q17.500 7.200 20.300 5" fill="none" stroke="#6a5a78" stroke-width="0.600"/><path d="M0 8.600 Q4 3 10.500 0.800 Q16 0.600 20.300 5" fill="none" stroke="#262b36" stroke-width="1.800"/><path d="M7 1.800 l-0.600 -1.300 M10.500 0.800 l0.100 -1.300 M13.500 0.900 l0.600 -1.200 M16.300 1.900 l0.900 -1.200 M18.400 3.200 l1.300 -0.900 M19.600 4.400 l1.300 -0.400" stroke="#262b36" stroke-width="0.900" fill="none"/><path d="M0 8.600 Q1.500 7 3.200 6.800 Q2.600 8.200 2.800 8.600Z" fill="#d9a3ad"/><circle cx="2.300" cy="7.900" r="0.600" fill="#fff"/></g><rect x="3" y="6" width="6" height="12.500" rx="1.600" fill="#111"/><circle cx="6" cy="9.400" r="2.100" fill="#f2c200"/><circle cx="6" cy="15" r="2.100" fill="#1fd01f"/><rect x="13" y="5" width="6" height="12.500" rx="1.600" fill="#111"/><circle cx="16" cy="8.400" r="2.100" fill="#ef1515"/><circle cx="16" cy="14" r="2.100" fill="#f2c200"/></svg>
<svg style="left:151px;top:68px" width="22" height="21" viewBox="0 0 22 21"><g transform="translate(1 0) scale(1) translate(-0.1 1.1)"><path d="M0 8.600 Q4 3 10.500 0.800 Q16 0.600 20.300 5 Q17.500 7.200 16 7.900 Q13 8.800 11 8.700 Z" fill="#c3cbee"/><circle cx="9.600" cy="5.100" r="3.700" fill="#3d5d90"/><circle cx="9.600" cy="5.100" r="3.700" fill="none" stroke="#2a4270" stroke-width="0.500"/><circle cx="9.300" cy="4.700" r="1.700" fill="#0b1628"/><ellipse cx="8.700" cy="3.500" rx="1.100" ry="0.800" fill="#a6c6ff"/><path d="M0 8.600 L11 8.700 Q13 8.800 16 7.900 Q17.500 7.200 20.300 5" fill="none" stroke="#6a5a78" stroke-width="0.600"/><path d="M0 8.600 Q4 3 10.500 0.800 Q16 0.600 20.300 5" fill="none" stroke="#262b36" stroke-width="1.800"/><path d="M7 1.800 l-0.600 -1.300 M10.500 0.800 l0.100 -1.300 M13.500 0.900 l0.600 -1.200 M16.300 1.900 l0.900 -1.200 M18.400 3.200 l1.300 -0.900 M19.600 4.400 l1.300 -0.400" stroke="#262b36" stroke-width="0.900" fill="none"/><path d="M0 8.600 Q1.500 7 3.200 6.800 Q2.600 8.200 2.800 8.600Z" fill="#d9a3ad"/><circle cx="2.300" cy="7.900" r="0.600" fill="#fff"/></g><path d="M4.600 13.500 a6.400 5.12 0 0 1 11.800 -1.500 l1.800 -2.400 l1.400 7.400 l-7 -1.600 l2 -1.800 a3.968 3.2 0 0 0 -7.800 1.600 z" fill="#3db83a" stroke="#1f7a1f" stroke-width="0.5"/><path d="M17.400 15.500 a6.400 5.12 0 0 1 -11.800 1.500 l-1.800 2.400 l-1.400 -7.400 l7 1.600 l-2 1.800 a3.968 3.2 0 0 0 7.800 -1.600 z" fill="#f0e020" stroke="#a89a00" stroke-width="0.5"/></svg>
<svg style="left:177px;top:68px" width="22" height="21" viewBox="0 0 22 21"><g transform="translate(1 0) scale(1) translate(-0.1 1.1)"><path d="M0 8.600 Q4 3 10.500 0.800 Q16 0.600 20.300 5 Q17.500 7.200 16 7.900 Q13 8.800 11 8.700 Z" fill="#c3cbee"/><circle cx="9.600" cy="5.100" r="3.700" fill="#3d5d90"/><circle cx="9.600" cy="5.100" r="3.700" fill="none" stroke="#2a4270" stroke-width="0.500"/><circle cx="9.300" cy="4.700" r="1.700" fill="#0b1628"/><ellipse cx="8.700" cy="3.500" rx="1.100" ry="0.800" fill="#a6c6ff"/><path d="M0 8.600 L11 8.700 Q13 8.800 16 7.900 Q17.500 7.200 20.300 5" fill="none" stroke="#6a5a78" stroke-width="0.600"/><path d="M0 8.600 Q4 3 10.500 0.800 Q16 0.600 20.300 5" fill="none" stroke="#262b36" stroke-width="1.800"/><path d="M7 1.800 l-0.600 -1.300 M10.500 0.800 l0.100 -1.300 M13.500 0.900 l0.600 -1.200 M16.300 1.900 l0.900 -1.200 M18.400 3.200 l1.300 -0.900 M19.600 4.400 l1.300 -0.400" stroke="#262b36" stroke-width="0.900" fill="none"/><path d="M0 8.600 Q1.500 7 3.200 6.800 Q2.600 8.200 2.800 8.600Z" fill="#d9a3ad"/><circle cx="2.300" cy="7.900" r="0.600" fill="#fff"/></g><path d="M2.400 13.200h5.600M5.200 10.400v5.600" stroke="#6a7a6a" stroke-width="2.2" fill="none" opacity="0.700"/><path d="M1.700 12.500h5.600M4.500 9.700v5.600" stroke="#8cf85a" stroke-width="2.2" fill="none"/><path d="M7 19.500 L13.500 10" stroke="#111" stroke-width="1.200"/><path d="M12.700 17.900h7.200" stroke="#a8a000" stroke-width="2.2" fill="none" stroke-linecap="round"/><path d="M11.900 17.200h7.200" stroke="#f8f800" stroke-width="2.200" fill="none"/></svg>
<svg style="left:203px;top:68px" width="22" height="21" viewBox="0 0 22 21"><g transform="translate(1 0) scale(1) translate(-0.1 1.1)"><path d="M0 8.600 Q4 3 10.500 0.800 Q16 0.600 20.300 5 Q17.500 7.200 16 7.900 Q13 8.800 11 8.700 Z" fill="#c3cbee"/><circle cx="9.600" cy="5.100" r="3.700" fill="#3d5d90"/><circle cx="9.600" cy="5.100" r="3.700" fill="none" stroke="#2a4270" stroke-width="0.500"/><circle cx="9.300" cy="4.700" r="1.700" fill="#0b1628"/><ellipse cx="8.700" cy="3.500" rx="1.100" ry="0.800" fill="#a6c6ff"/><path d="M0 8.600 L11 8.700 Q13 8.800 16 7.900 Q17.500 7.200 20.300 5" fill="none" stroke="#6a5a78" stroke-width="0.600"/><path d="M0 8.600 Q4 3 10.500 0.800 Q16 0.600 20.300 5" fill="none" stroke="#262b36" stroke-width="1.800"/><path d="M7 1.800 l-0.600 -1.300 M10.500 0.800 l0.100 -1.300 M13.500 0.900 l0.600 -1.200 M16.300 1.900 l0.900 -1.200 M18.400 3.200 l1.300 -0.900 M19.600 4.400 l1.300 -0.400" stroke="#262b36" stroke-width="0.900" fill="none"/><path d="M0 8.600 Q1.500 7 3.200 6.800 Q2.600 8.200 2.800 8.600Z" fill="#d9a3ad"/><circle cx="2.300" cy="7.900" r="0.600" fill="#fff"/></g><path d="M7.500 15.700h8.400M11.700 11.500v8.400" stroke="#6a7a6a" stroke-width="2.6" fill="none" opacity="0.700"/><path d="M6.800 15h8.400M11 10.800v8.400" stroke="#8cf85a" stroke-width="2.600" fill="none"/></svg>
<svg style="left:229px;top:68px" width="22" height="21" viewBox="0 0 22 21"><g transform="translate(1 0) scale(1) translate(-0.1 1.1)"><path d="M0 8.600 Q4 3 10.500 0.800 Q16 0.600 20.300 5 Q17.500 7.200 16 7.900 Q13 8.800 11 8.700 Z" fill="#c3cbee"/><circle cx="9.600" cy="5.100" r="3.700" fill="#3d5d90"/><circle cx="9.600" cy="5.100" r="3.700" fill="none" stroke="#2a4270" stroke-width="0.500"/><circle cx="9.300" cy="4.700" r="1.700" fill="#0b1628"/><ellipse cx="8.700" cy="3.500" rx="1.100" ry="0.800" fill="#a6c6ff"/><path d="M0 8.600 L11 8.700 Q13 8.800 16 7.900 Q17.500 7.200 20.300 5" fill="none" stroke="#6a5a78" stroke-width="0.600"/><path d="M0 8.600 Q4 3 10.500 0.800 Q16 0.600 20.300 5" fill="none" stroke="#262b36" stroke-width="1.800"/><path d="M7 1.800 l-0.600 -1.300 M10.500 0.800 l0.100 -1.300 M13.500 0.900 l0.600 -1.200 M16.300 1.900 l0.900 -1.200 M18.400 3.200 l1.300 -0.900 M19.600 4.400 l1.300 -0.400" stroke="#262b36" stroke-width="0.900" fill="none"/><path d="M0 8.600 Q1.500 7 3.200 6.800 Q2.600 8.200 2.800 8.600Z" fill="#d9a3ad"/><circle cx="2.300" cy="7.900" r="0.600" fill="#fff"/></g><path d="M8.200 14.200h9.200" stroke="#a8a000" stroke-width="2.6" fill="none" stroke-linecap="round"/><path d="M7.400 13.500h9.200" stroke="#f8f800" stroke-width="2.600" fill="none"/></svg>
<svg style="left:272px;top:68px" width="22" height="21" viewBox="0 0 22 21"><path d="M2.500 9.500 a8 7.200 0 0 1 14.500 -2 l2 -2.600 l1.200 8.400 l-8 -2 l2.200 -1.800 a4.800 4.400 0 0 0 -10.500 2 z" fill="#6ea3e6" stroke="#3f72c0" stroke-width="0.6"/><path d="M18.500 11.500 a8 7.200 0 0 1 -14.500 2 l-2 2.600 l-1.200 -8.400 l8 2 l-2.200 1.800 a4.800 4.400 0 0 0 10.500 -2 z" fill="#6ea3e6" stroke="#3f72c0" stroke-width="0.6"/></svg>
<svg style="left:299.500px;top:68px" width="22" height="21" viewBox="0 0 22 21"><path d="M5.300 5.100 v10.800 a5.700 2.600 0 0 0 11.400 0 v-10.800" fill="none" stroke="#1a1a1a" stroke-width="1.100"/><ellipse cx="11" cy="5.100" rx="5.700" ry="2.600" fill="none" stroke="#1a1a1a" stroke-width="1.100"/><path d="M5.300 15.900 a5.700 2.600 0 0 1 11.400 0" fill="none" stroke="#1a1a1a" stroke-width="0.800"/></svg>
<svg style="left:325px;top:68px" width="22" height="21" viewBox="0 0 22 21"><path d="M5.300 5.100 v10.800 a5.700 2.600 0 0 0 11.400 0 v-10.800" fill="none" stroke="#1a1a1a" stroke-width="1.100"/><ellipse cx="11" cy="5.100" rx="5.700" ry="2.600" fill="none" stroke="#1a1a1a" stroke-width="1.100"/></svg>
<svg style="left:351px;top:68px" width="22" height="21" viewBox="0 0 22 21"><path d="M5.300 5.100 v10.800 a5.700 2.600 0 0 0 11.400 0 v-10.800" fill="none" stroke="#1a1a1a" stroke-width="1.100"/><ellipse cx="11" cy="5.100" rx="5.700" ry="2.600" fill="none" stroke="#1a1a1a" stroke-width="1.100"/><path d="M5.300 15.900 a5.700 2.600 0 0 1 11.400 0" fill="none" stroke="#9a9a9a" stroke-width="0.800"/></svg>
<svg style="left:378px;top:68px" width="22" height="21" viewBox="0 0 22 21"><ellipse cx="14" cy="18.500" rx="6.500" ry="1.500" fill="#000" opacity="0.35"/><path d="M4.800 5.100 v10.800 a5.700 2.600 0 0 0 11.400 0 v-10.800" fill="url(#gCylC)" stroke="#20e0f0" stroke-width="1.200"/><ellipse cx="10.500" cy="5.100" rx="5.700" ry="2.600" fill="#7db0f0" stroke="#20e0f0" stroke-width="1.200"/></svg>
<svg style="left:402px;top:68px" width="22" height="21" viewBox="0 0 22 21"><ellipse cx="15" cy="18.500" rx="6" ry="1.500" fill="#000" opacity="0.35"/><path d="M5.300 5.100 v10.800 a5.700 2.600 0 0 0 11.400 0 v-10.800" fill="url(#gCylB)" stroke="#16223f" stroke-width="1"/><ellipse cx="11" cy="5.100" rx="5.700" ry="2.600" fill="#5f88cf" stroke="#16223f" stroke-width="1"/></svg>
<svg style="left:430px;top:68px" width="22" height="21" viewBox="0 0 22 21"><ellipse cx="15" cy="18.500" rx="6" ry="1.200" fill="#000" opacity="0.2"/><path d="M5.300 5.100 v10.800 a5.700 2.600 0 0 0 11.400 0 v-10.800" fill="#d5dff4" stroke="#7fe6f2" stroke-width="1.200"/><ellipse cx="11" cy="5.100" rx="5.700" ry="2.600" fill="#e4ebf8" stroke="#7fe6f2" stroke-width="1.200"/><path d="M5.300 15.900 a5.700 2.600 0 0 1 11.400 0" fill="none" stroke="#7fe6f2" stroke-width="0.800"/></svg>
<svg style="left:456px;top:68px" width="22" height="21" viewBox="0 0 22 21"><ellipse cx="15" cy="18.500" rx="6" ry="1.200" fill="#000" opacity="0.25"/><path d="M5.300 5.100 v10.800 a5.700 2.600 0 0 0 11.400 0 v-10.800" fill="url(#gCylL)" stroke="#4a4a4a" stroke-width="0.9"/><ellipse cx="11" cy="5.100" rx="5.700" ry="2.600" fill="#dfe7f8" stroke="#4a4a4a" stroke-width="0.9"/><path d="M5.300 15.900 a5.700 2.600 0 0 1 11.400 0" fill="none" stroke="#8a8a8a" stroke-width="0.7"/></svg>
<svg style="left:481px;top:68px" width="22" height="21" viewBox="0 0 22 21"><path d="M5.500 5.100 v11.300 a5.750 2.600 0 0 0 11.500 0 v-11.300" fill="#f2f2f2" stroke="#1a1a1a" stroke-width="1"/><ellipse cx="11.250" cy="5.100" rx="5.750" ry="2.600" fill="#f2f2f2" stroke="#1a1a1a" stroke-width="1"/><path d="M7 5 l3 12 M10 5 l-2 13 M11 5 l3 13 M15 5 l-3 13 M16 6 l-1 11" stroke="#333" stroke-width="0.6" fill="none"/></svg>
<svg style="left:506px;top:68px" width="22" height="21" viewBox="0 0 22 21"><path d="M1 3.600 v7.800 a4.500 2.600 0 0 0 9 0 v-7.800" fill="#e8e8e8" stroke="#555" stroke-width="0.8"/><ellipse cx="5.500" cy="3.600" rx="4.500" ry="2.600" fill="#e8e8e8" stroke="#555" stroke-width="0.8"/><path d="M10.500 8.600 v8.800 a5 2.600 0 0 0 10 0 v-8.800" fill="url(#gCylB)" stroke="#16223f" stroke-width="0.9"/><ellipse cx="15.500" cy="8.600" rx="5" ry="2.600" fill="#5f88cf" stroke="#16223f" stroke-width="0.9"/><path d="M11 3.500 q4 -3 7 0.500 l1.500 -1 l-0.500 4 l-4 -0.600 l1.500 -1 q-2 -2 -4 -0.500z" fill="#35c035"/><path d="M9.500 18 q-4 3 -7 -0.500 l-1.500 1 l0.500 -4 l4 0.600 l-1.500 1 q2 2 4 0.500z" fill="#35c035"/></svg>
<svg style="left:533px;top:68px" width="22" height="21" viewBox="0 0 22 21"><path d="M1.500 4.100 v10.300 a5.500 2.600 0 0 0 11 0 v-10.300" fill="url(#gCylB)" stroke="#16223f" stroke-width="0.9"/><ellipse cx="7" cy="4.100" rx="5.500" ry="2.600" fill="#5f88cf" stroke="#16223f" stroke-width="0.9"/><path d="M8.900 12 a5.600 5.040 0 0 1 9.700 -2 l2 -2.600 l1.200 8.400 l-8 -2 l2.200 -1.800 a3.360 3.080 0 0 0 -5.700 2 z" fill="#6ea3e6" stroke="#3f72c0" stroke-width="0.6"/><path d="M20.100 14 a5.600 5.040 0 0 1 -9.700 2 l-2 2.600 l-1.200 -8.400 l8 2 l-2.200 1.800 a3.360 3.080 0 0 0 5.700 -2 z" fill="#6ea3e6" stroke="#3f72c0" stroke-width="0.6"/></svg>
<svg style="left:559px;top:68px" width="22" height="21" viewBox="0 0 22 21"><rect x="2" y="2.300" width="16" height="12.400" rx="1" fill="#c8ccd4" stroke="#9aa0aa" stroke-width="0.600"/><rect x="3.300" y="3.600" width="13.400" height="9.600" fill="#2f4f9a"/><rect x="3.300" y="3.600" width="13.400" height="3" fill="#1a2a78"/><rect x="8" y="14.700" width="4" height="2.300" fill="#b8b8b8"/><g transform="translate(12.5 11) scale(1.15)"><path d="M-5.400 5.200 L-0.800 0.800" stroke="#2a5aa0" stroke-width="3.800" stroke-linecap="round"/><path d="M-5.400 5.200 L-0.800 0.800" stroke="#3f7fd0" stroke-width="2.800" stroke-linecap="round"/><path d="M-5 4.300 L-1.600 1" stroke="#9cc4f4" stroke-width="0.700"/><path d="M-0.800 0.800 L5.400 -5.400" stroke="#c4d2e6" stroke-width="1.500" stroke-linecap="round"/><path d="M-2 -2 L5.200 5.200" stroke="#8a8f98" stroke-width="3.200" stroke-linecap="round"/><path d="M-2 -2 L5.200 5.200" stroke="#f2f2f2" stroke-width="2.200" stroke-linecap="round"/><path d="M-3.400 -6 A2.500 2.500 0 1 1 -6 -3.400" fill="none" stroke="#8a8f98" stroke-width="2.900"/><path d="M-3.400 -6 A2.500 2.500 0 1 1 -6 -3.400" fill="none" stroke="#f2f2f2" stroke-width="1.900"/></g></svg>
<svg style="left:601px;top:68px" width="22" height="21" viewBox="0 0 22 21"><g transform="translate(1 0)"><path d="M9.500 2.800 l5 -2.200 l5 2.200 l-5 2.200z" fill="#e9e9e9" stroke="#333" stroke-width="0.6"/><path d="M9.500 2.800 l5 2.200 v6 l-5 -2.200z" fill="#a8a8a8" stroke="#333" stroke-width="0.6"/><path d="M14.500 5 l5 -2.200 v6 l-5 2.200z" fill="#d0d0d0" stroke="#333" stroke-width="0.6"/><path d="M0.500 3.600 l5 -2.200 l5 2.200 l-5 2.200z" fill="#e9e9e9" stroke="#333" stroke-width="0.6"/><path d="M0.500 3.600 l5 2.200 v6 l-5 -2.200z" fill="#a8a8a8" stroke="#333" stroke-width="0.6"/><path d="M5.500 5.800 l5 -2.200 v6 l-5 2.200z" fill="#d0d0d0" stroke="#333" stroke-width="0.6"/></g><path d="M2.500 15.700h6.400M5.700 12.500v6.400" stroke="#6a7a6a" stroke-width="2.2" fill="none" opacity="0.700"/><path d="M1.800 15h6.400M5 11.800v6.400" stroke="#8cf85a" stroke-width="2.200" fill="none"/><path d="M16 11.500 a3 3 0 1 1 -0.500 5.400" stroke="#4a7fd4" stroke-width="1.800" fill="none"/><path d="M15.700 17.100 l-5.400 -4.400" stroke="#4a7fd4" stroke-width="1.800"/></svg>
<svg style="left:627px;top:68px" width="22" height="21" viewBox="0 0 22 21"><g transform="translate(1 0)"><path d="M9.500 2.800 l5 -2.200 l5 2.200 l-5 2.200z" fill="#e9e9e9" stroke="#333" stroke-width="0.6"/><path d="M9.500 2.800 l5 2.200 v6 l-5 -2.200z" fill="#a8a8a8" stroke="#333" stroke-width="0.6"/><path d="M14.500 5 l5 -2.200 v6 l-5 2.200z" fill="#d0d0d0" stroke="#333" stroke-width="0.6"/><path d="M0.500 3.600 l5 -2.200 l5 2.200 l-5 2.200z" fill="#e9e9e9" stroke="#333" stroke-width="0.6"/><path d="M0.500 3.600 l5 2.200 v6 l-5 -2.200z" fill="#a8a8a8" stroke="#333" stroke-width="0.6"/><path d="M5.500 5.800 l5 -2.200 v6 l-5 2.200z" fill="#d0d0d0" stroke="#333" stroke-width="0.6"/></g><rect x="3.500" y="6.500" width="6" height="12.500" rx="1.600" fill="#111"/><circle cx="6.500" cy="9.900" r="2.100" fill="#f2c200"/><circle cx="6.500" cy="15.500" r="2.100" fill="#1fd01f"/><rect x="13.500" y="5.500" width="6" height="12.500" rx="1.600" fill="#111"/><circle cx="16.500" cy="8.900" r="2.100" fill="#ef1515"/><circle cx="16.500" cy="14.500" r="2.100" fill="#f2c200"/></svg>
<svg style="left:653px;top:68px" width="22" height="21" viewBox="0 0 22 21"><g transform="translate(1 0)"><path d="M9.500 2.800 l5 -2.200 l5 2.200 l-5 2.200z" fill="#e9e9e9" stroke="#333" stroke-width="0.6"/><path d="M9.500 2.800 l5 2.200 v6 l-5 -2.200z" fill="#a8a8a8" stroke="#333" stroke-width="0.6"/><path d="M14.500 5 l5 -2.200 v6 l-5 2.200z" fill="#d0d0d0" stroke="#333" stroke-width="0.6"/><path d="M0.500 3.600 l5 -2.200 l5 2.200 l-5 2.200z" fill="#e9e9e9" stroke="#333" stroke-width="0.6"/><path d="M0.500 3.600 l5 2.200 v6 l-5 -2.200z" fill="#a8a8a8" stroke="#333" stroke-width="0.6"/><path d="M5.500 5.800 l5 -2.200 v6 l-5 2.200z" fill="#d0d0d0" stroke="#333" stroke-width="0.6"/></g><path d="M4.600 13.500 a6.400 5.12 0 0 1 11.800 -1.500 l1.800 -2.400 l1.400 7.400 l-7 -1.600 l2 -1.800 a3.968 3.2 0 0 0 -7.800 1.600 z" fill="#3db83a" stroke="#1f7a1f" stroke-width="0.5"/><path d="M17.400 15.500 a6.400 5.12 0 0 1 -11.800 1.500 l-1.800 2.400 l-1.400 -7.400 l7 1.600 l-2 1.800 a3.968 3.2 0 0 0 7.800 -1.600 z" fill="#f0e020" stroke="#a89a00" stroke-width="0.5"/></svg>
<svg style="left:679px;top:68px" width="22" height="21" viewBox="0 0 22 21"><g transform="translate(1 0)"><path d="M9.500 2.800 l5 -2.200 l5 2.200 l-5 2.200z" fill="#e9e9e9" stroke="#333" stroke-width="0.6"/><path d="M9.500 2.800 l5 2.200 v6 l-5 -2.200z" fill="#a8a8a8" stroke="#333" stroke-width="0.6"/><path d="M14.500 5 l5 -2.200 v6 l-5 2.200z" fill="#d0d0d0" stroke="#333" stroke-width="0.6"/><path d="M0.500 3.600 l5 -2.200 l5 2.200 l-5 2.200z" fill="#e9e9e9" stroke="#333" stroke-width="0.6"/><path d="M0.500 3.600 l5 2.200 v6 l-5 -2.200z" fill="#a8a8a8" stroke="#333" stroke-width="0.6"/><path d="M5.500 5.800 l5 -2.200 v6 l-5 2.200z" fill="#d0d0d0" stroke="#333" stroke-width="0.6"/></g><path d="M2.400 13.200h5.600M5.200 10.400v5.600" stroke="#6a7a6a" stroke-width="2.2" fill="none" opacity="0.700"/><path d="M1.700 12.500h5.600M4.500 9.700v5.600" stroke="#8cf85a" stroke-width="2.200" fill="none"/><path d="M7 19.500 L13.500 10" stroke="#111" stroke-width="1.200"/><path d="M13.200 17.900h7.200" stroke="#a8a000" stroke-width="2.2" fill="none" stroke-linecap="round"/><path d="M12.400 17.200h7.200" stroke="#f8f800" stroke-width="2.200" fill="none"/></svg>
<svg style="left:706px;top:68px" width="22" height="21" viewBox="0 0 22 21"><ellipse cx="14.500" cy="18.500" rx="6" ry="1.500" fill="#000" opacity="0.35"/><path d="M5.300 5.100 v10.800 a5.700 2.600 0 0 0 11.400 0 v-10.800" fill="url(#gCylB)" stroke="#16223f" stroke-width="1"/><ellipse cx="11" cy="5.100" rx="5.700" ry="2.600" fill="#5f88cf" stroke="#16223f" stroke-width="1"/><path d="M11 6.500 v12" stroke="#0b1020" stroke-width="1.300" stroke-dasharray="2.500 1.800"/></svg>
<svg style="left:732px;top:68px" width="22" height="21" viewBox="0 0 22 21"><ellipse cx="14.500" cy="18.500" rx="6" ry="1.500" fill="#000" opacity="0.35"/><path d="M5.300 5.100 v10.800 a5.700 2.600 0 0 0 11.400 0 v-10.800" fill="#c7cfe4" stroke="#16223f" stroke-width="1"/><ellipse cx="11" cy="5.100" rx="5.700" ry="2.600" fill="#5f88cf" stroke="#16223f" stroke-width="1"/><path d="M10 6 v12.800" stroke="#f0e020" stroke-width="1.600"/><path d="M13.200 5.800 v12.200" stroke="#3f5fa8" stroke-width="1.600"/></svg>
<svg style="left:759px;top:68px" width="22" height="21" viewBox="0 0 22 21"><ellipse cx="14.500" cy="18.500" rx="6" ry="1.200" fill="#000" opacity="0.25"/><path d="M4.800 5.100 v10.800 a5.800 2.600 0 0 0 11.600 0 v-10.800" fill="#d5e6f6" stroke="#2fe0f0" stroke-width="1.200"/><ellipse cx="10.600" cy="5.100" rx="5.800" ry="2.600" fill="#e6f2fb" stroke="#2fe0f0" stroke-width="1.200"/><path d="M7 11.500 l3.500 5.500 l6 -9.500" fill="none" stroke="#2fc02f" stroke-width="3" stroke-linejoin="round"/></svg>
<svg style="left:784px;top:68px" width="22" height="21" viewBox="0 0 22 21"><ellipse cx="7" cy="17.500" rx="6.500" ry="1.300" fill="#000" opacity="0.3"/><path d="M7 6.100 v10.300 a5.750 2.600 0 0 0 11.500 0 v-10.300" fill="#d5e6f6" stroke="#2fe0f0" stroke-width="1.200"/><ellipse cx="12.750" cy="6.100" rx="5.750" ry="2.600" fill="#e6f2fb" stroke="#2fe0f0" stroke-width="1.200"/><rect x="14.500" y="1" width="5" height="5" fill="none" stroke="#e0901a" stroke-width="1.300"/><circle cx="15.500" cy="5" r="1.600" fill="#f07820"/></svg>
<svg style="left:810px;top:68px" width="22" height="21" viewBox="0 0 22 21"><path d="M5.500 5.100 v11.300 a5.500 2.600 0 0 0 11 0 v-11.300" fill="#e8f2fc" stroke="#6aa6e8" stroke-width="0.9"/><ellipse cx="11" cy="5.100" rx="5.500" ry="2.600" fill="#e8f2fc" stroke="#6aa6e8" stroke-width="0.9"/><path d="M7 5 l3 12 M10 5 l-2 13 M11 5 l3 13 M15 5 l-3 13" stroke="#6aa6e8" stroke-width="0.6" fill="none"/></svg>
<svg style="left:836px;top:68px" width="22" height="21" viewBox="0 0 22 21"><path d="M2 4.500 l9 -2.500 l9 2.500 l-9 3z" fill="#5f8fe0" stroke="#0f1a3a" stroke-width="0.7"/><path d="M2 4.500 l9 3 v10.500 l-8 -8z" fill="#2a4fa8" stroke="#0f1a3a" stroke-width="0.7"/><path d="M20 4.500 l-9 3 v10.500 l8 -8z" fill="#14265a" stroke="#0f1a3a" stroke-width="0.7"/></svg>
<svg style="left:878px;top:68px" width="22" height="21" viewBox="0 0 22 21"><g transform="translate(9.5 8) scale(0.95)"><path d="M0 3 l6 -3 l6 3 l-6 3z" fill="#e4e4e4" stroke="#333" stroke-width="0.5"/><path d="M0 3 l6 3 v7 l-6 -3z" fill="#8f8f8f" stroke="#333" stroke-width="0.5"/><path d="M12 3 l-6 3 v7 l6 -3z" fill="#5f5f5f" stroke="#333" stroke-width="0.5"/></g><path d="M7.25 11.25 l-4.55 4.55" stroke="#8d8d8d" stroke-width="3.2" stroke-linecap="round"/><path d="M7.25 11.25 l-4.55 4.55" stroke="#dcdcdc" stroke-width="1.4" stroke-linecap="round"/><circle cx="11" cy="7.500" r="5" fill="url(#gLens)" stroke="#5f8ac4" stroke-width="1.4"/><circle cx="11" cy="7.500" r="6" fill="none" stroke="#d6e2f2" stroke-width="0.7"/><path d="M2.500 2 v3.600 M0.700 3.800 h3.600 M0.700 7.200 h3.600" stroke="#000" stroke-width="0.9"/><path d="M9.500 5 l4 2.500 l-4 2.500z" fill="#9fb6d8" stroke="#5f7fae" stroke-width="0.4"/></svg>
<svg style="left:904px;top:68px" width="22" height="21" viewBox="0 0 22 21"><g transform="translate(10 8.5) scale(0.9)"><path d="M0 3 l6 -3 l6 3 l-6 3z" fill="#e4e4e4" stroke="#333" stroke-width="0.5"/><path d="M0 3 l6 3 v7 l-6 -3z" fill="#8f8f8f" stroke="#333" stroke-width="0.5"/><path d="M12 3 l-6 3 v7 l6 -3z" fill="#5f5f5f" stroke="#333" stroke-width="0.5"/></g><path d="M7.25 11.25 l-4.55 4.55" stroke="#8d8d8d" stroke-width="3.2" stroke-linecap="round"/><path d="M7.25 11.25 l-4.55 4.55" stroke="#dcdcdc" stroke-width="1.4" stroke-linecap="round"/><circle cx="11" cy="7.500" r="5" fill="url(#gLens)" stroke="#5f8ac4" stroke-width="1.4"/><circle cx="11" cy="7.500" r="6" fill="none" stroke="#d6e2f2" stroke-width="0.7"/><path d="M2.500 2.500 l3.400 3.400" stroke="#2fc02f" stroke-width="1.600" fill="none"/><path d="M1.500 1.500 h3.600 l-3.600 3.600 z" fill="#2fc02f" stroke="#1f8f1f" stroke-width="0.300"/><path d="M19 2.500 l-3.400 3.400" stroke="#2fc02f" stroke-width="1.600" fill="none"/><path d="M20 1.500 h-3.600 l3.600 3.600 z" fill="#2fc02f" stroke="#1f8f1f" stroke-width="0.300"/><path d="M2.500 18.500 l3.400 -3.400" stroke="#2fc02f" stroke-width="1.600" fill="none"/><path d="M1.500 19.500 h3.600 l-3.600 -3.600 z" fill="#2fc02f" stroke="#1f8f1f" stroke-width="0.300"/><path d="M19 18.500 l-3.400 -3.400" stroke="#2fc02f" stroke-width="1.600" fill="none"/><path d="M20 19.500 h-3.600 l3.600 -3.600 z" fill="#2fc02f" stroke="#1f8f1f" stroke-width="0.300"/><path d="M9.500 5 l4 2.500 l-4 2.500z" fill="#9fb6d8" stroke="#5f7fae" stroke-width="0.4"/></svg>
<svg style="left:930px;top:68px" width="22" height="21" viewBox="0 0 22 21"><path d="M2.500 2.500 l3.400 3.400" stroke="#2fc02f" stroke-width="1.600" fill="none"/><path d="M1.500 1.500 h3.600 l-3.600 3.600 z" fill="#2fc02f" stroke="#1f8f1f" stroke-width="0.300"/><path d="M19.500 2.500 l-3.400 3.400" stroke="#2fc02f" stroke-width="1.600" fill="none"/><path d="M20.500 1.500 h-3.600 l3.600 3.600 z" fill="#2fc02f" stroke="#1f8f1f" stroke-width="0.300"/><path d="M2.500 18.500 l3.400 -3.400" stroke="#2fc02f" stroke-width="1.600" fill="none"/><path d="M1.500 19.500 h3.600 l-3.600 -3.600 z" fill="#2fc02f" stroke="#1f8f1f" stroke-width="0.300"/><path d="M19.500 18.500 l-3.400 -3.400" stroke="#2fc02f" stroke-width="1.600" fill="none"/><path d="M20.500 19.500 h-3.600 l3.600 -3.600 z" fill="#2fc02f" stroke="#1f8f1f" stroke-width="0.300"/><rect x="4.500" y="5" width="13" height="10.500" fill="url(#gBlueV)" stroke="#222" stroke-width="1.200"/><path d="M7.500 7.500 v5.500 M14.500 7.500 v5.500 M6.600 8.400 l0.900 -0.900 M13.600 8.400 l0.900 -0.900" stroke="#1a1a5a" stroke-width="1.100" fill="none"/><rect x="10.400" y="8.300" width="1.200" height="1.200" fill="#1a1a5a"/><rect x="10.400" y="11.500" width="1.200" height="1.200" fill="#1a1a5a"/></svg>
<svg style="left:956px;top:68px" width="22" height="21" viewBox="0 0 22 21"><path d="M5 16.500 L16.500 4.500" stroke="#1f8f1f" stroke-width="3.200"/><path d="M5 16.500 L16.500 4.500" stroke="#45d045" stroke-width="1.600"/><path d="M11.500 3 l8 -1.500 l-2 8z" fill="#2fc02f" stroke="#1f8f1f" stroke-width="0.6"/><circle cx="5" cy="16.500" r="2.800" fill="#e6e6e0" stroke="#555" stroke-width="0.6"/><circle cx="4.200" cy="15.700" r="1" fill="#fff"/></svg>
<svg style="left:982px;top:68px" width="22" height="21" viewBox="0 0 22 21"><path d="M2.500 9.500 a8 7.200 0 0 1 14.500 -2 l2 -2.600 l1.200 8.400 l-8 -2 l2.200 -1.800 a4.800 4.400 0 0 0 -10.500 2 z" fill="#2fb52f" stroke="#1a7a1a" stroke-width="0.6"/><path d="M18.500 11.500 a8 7.200 0 0 1 -14.500 2 l-2 2.600 l-1.200 -8.400 l8 2 l-2.200 1.800 a4.800 4.400 0 0 0 10.500 -2 z" fill="#2fb52f" stroke="#1a7a1a" stroke-width="0.6"/></svg>
<svg style="left:1008px;top:68px" width="22" height="21" viewBox="0 0 22 21"><g transform="translate(1 -0.5) scale(1) translate(-0.1 1.1)"><path d="M0 8.600 Q4 3 10.500 0.800 Q16 0.600 20.300 5 Q17.500 7.200 16 7.900 Q13 8.800 11 8.700 Z" fill="#c3cbee"/><circle cx="9.600" cy="5.100" r="3.700" fill="#3d5d90"/><circle cx="9.600" cy="5.100" r="3.700" fill="none" stroke="#2a4270" stroke-width="0.500"/><circle cx="9.300" cy="4.700" r="1.700" fill="#0b1628"/><ellipse cx="8.700" cy="3.500" rx="1.100" ry="0.800" fill="#a6c6ff"/><path d="M0 8.600 L11 8.700 Q13 8.800 16 7.900 Q17.500 7.200 20.300 5" fill="none" stroke="#6a5a78" stroke-width="0.600"/><path d="M0 8.600 Q4 3 10.500 0.800 Q16 0.600 20.300 5" fill="none" stroke="#262b36" stroke-width="1.800"/><path d="M7 1.800 l-0.600 -1.300 M10.500 0.800 l0.100 -1.300 M13.500 0.900 l0.600 -1.200 M16.300 1.900 l0.900 -1.200 M18.400 3.200 l1.300 -0.900 M19.600 4.400 l1.300 -0.400" stroke="#262b36" stroke-width="0.900" fill="none"/><path d="M0 8.600 Q1.500 7 3.200 6.800 Q2.600 8.200 2.800 8.600Z" fill="#d9a3ad"/><circle cx="2.300" cy="7.900" r="0.600" fill="#fff"/></g><circle cx="11" cy="14" r="5.800" fill="#f8d84a" stroke="#c89a10" stroke-width="0.6"/><circle cx="9" cy="12.500" r="0.900" fill="#3a2a00"/><circle cx="13" cy="12.500" r="0.900" fill="#3a2a00"/><path d="M8 15 q3 3 6 0" fill="none" stroke="#3a2a00" stroke-width="0.8"/></svg>
<svg style="left:1051px;top:68px" width="22" height="21" viewBox="0 0 22 21"><g transform="translate(1 0) scale(1)"><path d="M1 12 l9 -5.500 l9 5 l-9 6.500z" fill="#e6ecf8" stroke="#b9c3da" stroke-width="0.5"/><path d="M6 14 L15 7.800" stroke="#2fbf2f" stroke-width="1.800"/><path d="M12.600 7.200 l4.400 -0.800 l-1.600 4z" fill="#2fbf2f"/><path d="M6 14 L12.500 18" stroke="#e02020" stroke-width="1.800"/><path d="M10.400 19.200 l4.600 0.300 l-2.200 -4z" fill="#e02020"/><path d="M6 14 V4" stroke="#1f6fe8" stroke-width="1.800"/><path d="M3.600 5.200 l2.400 -4.400 l2.400 4.400z" fill="#1f6fe8"/><circle cx="6" cy="14" r="1.900" fill="#e6e6e6" stroke="#777" stroke-width="0.5"/></g></svg>
<svg style="left:1077px;top:68px" width="22" height="21" viewBox="0 0 22 21"><path d="M8 3.500 l6 -2 l6 4.500 l-6 3.500z" fill="#e6ecf8" stroke="#b9c3da" stroke-width="0.5"/><g transform="translate(7.5 -1) scale(0.62)"><path d="M6 14 L15 7.800" stroke="#2fbf2f" stroke-width="1.800"/><path d="M12.600 7.200 l4.400 -0.800 l-1.600 4z" fill="#2fbf2f"/><path d="M6 14 L12.500 18" stroke="#e02020" stroke-width="1.800"/><path d="M10.400 19.200 l4.600 0.300 l-2.200 -4z" fill="#e02020"/><path d="M6 14 V4" stroke="#1f6fe8" stroke-width="1.800"/><path d="M3.600 5.200 l2.400 -4.400 l2.400 4.400z" fill="#1f6fe8"/><circle cx="6" cy="14" r="1.900" fill="#e6e6e6" stroke="#777" stroke-width="0.5"/></g><path d="M3 17 L12 8" stroke="#1f8f1f" stroke-width="4"/><path d="M3 17 L12 8" stroke="#3fd03f" stroke-width="2"/><path d="M7.500 6.500 l7.500 -1.500 l-1.500 7.500z" fill="#2fc02f" stroke="#1f8f1f" stroke-width="0.5"/><path d="M8 17.500 v-4 h11 v4" fill="none" stroke="#9a9a9a" stroke-width="2"/><circle cx="3.500" cy="17" r="2" fill="#ddd" stroke="#777" stroke-width="0.5"/></svg>
<svg style="left:1103px;top:68px" width="22" height="21" viewBox="0 0 22 21"><path d="M10 5.500 l6 -2.500 l5 4 l-6 4z" fill="#e6ecf8" stroke="#b9c3da" stroke-width="0.5"/><g transform="translate(9 0) scale(0.62)"><path d="M6 14 L15 7.800" stroke="#2fbf2f" stroke-width="1.800"/><path d="M12.600 7.200 l4.400 -0.800 l-1.600 4z" fill="#2fbf2f"/><path d="M6 14 L12.500 18" stroke="#e02020" stroke-width="1.800"/><path d="M10.400 19.200 l4.600 0.300 l-2.200 -4z" fill="#e02020"/><path d="M6 14 V4" stroke="#1f6fe8" stroke-width="1.800"/><path d="M3.600 5.200 l2.400 -4.400 l2.400 4.400z" fill="#1f6fe8"/><circle cx="6" cy="14" r="1.900" fill="#e6e6e6" stroke="#777" stroke-width="0.5"/></g><path d="M2 9 l4 -3.500 l0.500 2.200 l4 3.800 l2.200 -0.500 l-1.500 5 l-5 1.200 l1 -2.200 l-4 -3.800 l-2.200 0.800z" fill="#2fc02f" stroke="#1f8f1f" stroke-width="0.5" transform="translate(0 2)"/></svg>
<svg style="left:1146px;top:68px" width="22" height="21" viewBox="0 0 22 21"><rect x="0.800" y="1" width="6" height="5.600" fill="#00e0f0"/><rect x="7.400" y="1" width="6" height="5.600" fill="#f8e000"/><rect x="14" y="1" width="6" height="5.600" fill="#00e000"/><rect x="0.800" y="7.300" width="6" height="5.600" fill="#f88000"/><rect x="7.400" y="7.300" width="6" height="5.600" fill="#a06000"/><rect x="14" y="7.300" width="6" height="5.600" fill="#f000e0"/><rect x="0.800" y="13.600" width="6" height="5.600" fill="#0000f0"/><rect x="7.400" y="13.600" width="6" height="5.600" fill="#00a030"/><rect x="14" y="13.600" width="6" height="5.600" fill="#808080"/></svg>
<svg style="left:1172px;top:68px" width="22" height="21" viewBox="0 0 22 21"><rect x="3" y="0.800" width="15.500" height="18.800" fill="url(#gBlueV)" stroke="#6a7898" stroke-width="1"/><rect x="5" y="2.500" width="11.500" height="1.600" fill="#5fa8f8"/><path d="M5 6 h4 M12.500 6 h4" stroke="#f8b020" stroke-width="1.200"/><path d="M5 8.500 h11.500" stroke="#8fe08f" stroke-width="1.200"/><rect x="5" y="10.500" width="2.600" height="2.400" fill="#00e0f0"/><rect x="8.100" y="10.500" width="2.600" height="2.400" fill="#f8e000"/><rect x="11.200" y="10.500" width="2.600" height="2.400" fill="#00e000"/><rect x="5" y="13.400" width="2.600" height="2.400" fill="#f88000"/><rect x="8.100" y="13.400" width="2.600" height="2.400" fill="#a06000"/><rect x="11.200" y="13.400" width="2.600" height="2.400" fill="#f000e0"/><rect x="5" y="16.300" width="2.600" height="2.400" fill="#0000f0"/><rect x="8.100" y="16.300" width="2.600" height="2.400" fill="#00a030"/><rect x="11.200" y="16.300" width="2.600" height="2.400" fill="#808080"/></svg>
<svg style="left:1198px;top:68px" width="22" height="21" viewBox="0 0 22 21"><circle cx="11.400" cy="10" r="9.500" fill="#63a83a" stroke="#4a6a44" stroke-width="1"/><circle cx="10" cy="8" r="6" fill="#7cc24a" opacity="0.600"/><ellipse cx="11.800" cy="14" rx="2.900" ry="3.600" fill="#d6d2bc"/><path d="M11 9 h2.400 v3 h-2.400z" fill="#d6d2bc"/><g transform="translate(11.4 10) scale(1.05)"><path d="M-5.400 5.200 L-0.800 0.800" stroke="#2a5aa0" stroke-width="3.800" stroke-linecap="round"/><path d="M-5.400 5.200 L-0.800 0.800" stroke="#3f7fd0" stroke-width="2.800" stroke-linecap="round"/><path d="M-5 4.300 L-1.600 1" stroke="#9cc4f4" stroke-width="0.700"/><path d="M-0.800 0.800 L5.400 -5.400" stroke="#c4d2e6" stroke-width="1.500" stroke-linecap="round"/><path d="M-2 -2 L5.200 5.200" stroke="#8a8f98" stroke-width="3.200" stroke-linecap="round"/><path d="M-2 -2 L5.200 5.200" stroke="#f2f2f2" stroke-width="2.200" stroke-linecap="round"/><path d="M-3.400 -6 A2.500 2.500 0 1 1 -6 -3.400" fill="none" stroke="#8a8f98" stroke-width="2.900"/><path d="M-3.400 -6 A2.500 2.500 0 1 1 -6 -3.400" fill="none" stroke="#f2f2f2" stroke-width="1.900"/></g></svg>
<svg style="left:1224px;top:68px" width="22" height="21" viewBox="0 0 22 21"><rect x="1.200" y="0.700" width="19.600" height="19.300" rx="1" fill="url(#gBlueV)" stroke="#4a5064" stroke-width="1.300"/><rect x="1.800" y="1.300" width="18.400" height="3.600" fill="#3a80d0"/><rect x="5.900" y="5.800" width="1.900" height="1.900" rx="0.500" fill="#a8c400"/><rect x="9" y="5.800" width="1.900" height="1.900" rx="0.500" fill="#a8c400"/><rect x="12.200" y="5.800" width="1.900" height="1.900" rx="0.500" fill="#a8c400"/><rect x="15.300" y="5.800" width="1.900" height="1.900" rx="0.500" fill="#a8c400"/><rect x="3" y="8.500" width="2" height="2" rx="0.500" fill="#c05a00"/><rect x="3" y="11.600" width="2" height="2" rx="0.500" fill="#c05a00"/><rect x="3" y="14.800" width="2" height="2" rx="0.500" fill="#c05a00"/><rect x="3" y="5.800" width="2" height="1.900" fill="#c4c4c4"/><g transform="translate(13.7 13.3) scale(0.85)"><path d="M-5.400 5.200 L-0.800 0.800" stroke="#2a5aa0" stroke-width="3.800" stroke-linecap="round"/><path d="M-5.400 5.200 L-0.800 0.800" stroke="#4a80c8" stroke-width="2.800" stroke-linecap="round"/><path d="M-5 4.300 L-1.600 1" stroke="#9cc4f4" stroke-width="0.700"/><path d="M-0.800 0.800 L5.400 -5.400" stroke="#aab4c4" stroke-width="1.500" stroke-linecap="round"/><path d="M-2 -2 L5.200 5.200" stroke="#9aa0ac" stroke-width="3.200" stroke-linecap="round"/><path d="M-2 -2 L5.200 5.200" stroke="#cfd4dc" stroke-width="2.200" stroke-linecap="round"/><path d="M-3.400 -6 A2.500 2.500 0 1 1 -6 -3.400" fill="none" stroke="#9aa0ac" stroke-width="2.900"/><path d="M-3.400 -6 A2.500 2.500 0 1 1 -6 -3.400" fill="none" stroke="#cfd4dc" stroke-width="1.900"/></g></svg>
<svg style="left:1250.500px;top:68px" width="22" height="21" viewBox="0 0 22 21"><rect x="1.500" y="1.500" width="1.600" height="1.600" fill="#2f4f8a" transform="rotate(45 2.3 2.3)"/><rect x="1.500" y="6" width="1.600" height="1.600" fill="#2f4f8a" transform="rotate(45 2.3 6.8)"/><rect x="1.500" y="10.500" width="1.600" height="1.600" fill="#2f4f8a" transform="rotate(45 2.3 11.3)"/><rect x="1.500" y="15" width="1.600" height="1.600" fill="#2f4f8a" transform="rotate(45 2.3 15.8)"/><rect x="1.500" y="19" width="1.600" height="1.600" fill="#2f4f8a" transform="rotate(45 2.3 19.8)"/><rect x="6" y="1.500" width="1.600" height="1.600" fill="#2f4f8a" transform="rotate(45 6.8 2.3)"/><rect x="6" y="19" width="1.600" height="1.600" fill="#2f4f8a" transform="rotate(45 6.8 19.8)"/><rect x="10.500" y="1.500" width="1.600" height="1.600" fill="#2f4f8a" transform="rotate(45 11.3 2.3)"/><rect x="10.500" y="10.500" width="1.600" height="1.600" fill="#2f4f8a" transform="rotate(45 11.3 11.3)"/><rect x="10.500" y="19" width="1.600" height="1.600" fill="#2f4f8a" transform="rotate(45 11.3 19.8)"/><rect x="15" y="1.500" width="1.600" height="1.600" fill="#2f4f8a" transform="rotate(45 15.8 2.3)"/><rect x="15" y="19" width="1.600" height="1.600" fill="#2f4f8a" transform="rotate(45 15.8 19.8)"/><rect x="19" y="1.500" width="1.600" height="1.600" fill="#2f4f8a" transform="rotate(45 19.8 2.3)"/><rect x="19" y="6" width="1.600" height="1.600" fill="#2f4f8a" transform="rotate(45 19.8 6.8)"/><rect x="19" y="10.500" width="1.600" height="1.600" fill="#2f4f8a" transform="rotate(45 19.8 11.3)"/><rect x="19" y="15" width="1.600" height="1.600" fill="#2f4f8a" transform="rotate(45 19.8 15.8)"/><rect x="19" y="19" width="1.600" height="1.600" fill="#2f4f8a" transform="rotate(45 19.8 19.8)"/><path d="M5 10.500 l6 -6.500 l7 -1 l2 4.500 l-4 4.500 l-5 -1 l-3 2.500z" fill="#e8b868" stroke="#9a6a20" stroke-width="0.6"/><circle cx="6" cy="14.500" r="3.400" fill="#f0e820"/><path d="M3.800 14.500 h4.400 M6 12.300 v4.400" stroke="#2f7fe8" stroke-width="1.300"/></svg>
<svg style="left:1276px;top:68px" width="22" height="21" viewBox="0 0 22 21"><path d="M6.500 3 L20 1.500 L14.500 16.500 L1 18Z" fill="#e88a8a" stroke="#2f6fd8" stroke-width="1.300"/><path d="M10 2.600 L4.500 17.600 M13.500 2.200 L8 17.200 M17 1.800 L11.500 16.800 M5 7 L18.500 5.500 M3.800 10.500 L17 9 M2.500 14 L15.800 12.500" stroke="#d82020" stroke-width="0.9" fill="none"/><path d="M15 16.500 l5.500 -1 l-1 2.500z" fill="#555" opacity="0.5"/></svg>
<svg style="left:7px;top:133px" width="22" height="22" viewBox="0 0 22 22"><path d="M4 5 q3 -3 6 -1 M3 8.500 q3 -3 6 -1 M3.500 12 q3 -2 5 -1" stroke="#b5c6de" stroke-width="1.600" fill="none"/><path d="M8.45 13.05 l-4.55 4.55" stroke="#8d8d8d" stroke-width="3.2" stroke-linecap="round"/><path d="M8.45 13.05 l-4.55 4.55" stroke="#dcdcdc" stroke-width="1.4" stroke-linecap="round"/><circle cx="12.500" cy="9" r="5.400" fill="url(#gLens)" stroke="#5f8ac4" stroke-width="1.4"/><circle cx="12.500" cy="9" r="6.400" fill="none" stroke="#d6e2f2" stroke-width="0.7"/></svg>
<svg style="left:33px;top:133px" width="22" height="22" viewBox="0 0 22 22"><path d="M3 3 l2 2.500 M7 2.500 l11 13 M12 9 l6 7" stroke="#2f6fe0" stroke-width="1.500" stroke-dasharray="5 2" fill="none"/><ellipse cx="11" cy="18" rx="7" ry="1.400" fill="#000" opacity="0.3"/><path d="M5.69437 13.2358 L14.9253 2.63732 L17.7908 5.13309 L8.55988 15.7316 L5.69437 13.2358 Z" fill="url(#gPencil)" stroke="#6b4308" stroke-width="0.5"/><path d="M4.500 17.500 L5.69437 13.2358 L8.55988 15.7316 Z" fill="#f3dcb0" stroke="#6b4308" stroke-width="0.4"/><path d="M4.500 17.500 L4.95731 15.9091 L6.01303 16.8286 Z" fill="#222"/><path d="M14.9253 2.63732 L16.5672 0.752117 L19.4328 3.24788 L17.7908 5.13309 Z" fill="#e03030"/><path d="M15.500 0 h5.600 l-2.800 3z" fill="#000"/></svg>
<svg style="left:7px;top:159px" width="22" height="22" viewBox="0 0 22 22"><path d="M2.500 3.500 l3.400 3.400" stroke="#2fc02f" stroke-width="1.600" fill="none"/><path d="M1.500 2.500 h3.600 l-3.600 3.600 z" fill="#2fc02f" stroke="#1f8f1f" stroke-width="0.300"/><path d="M19 3.500 l-3.400 3.400" stroke="#2fc02f" stroke-width="1.600" fill="none"/><path d="M20 2.500 h-3.600 l3.600 3.600 z" fill="#2fc02f" stroke="#1f8f1f" stroke-width="0.300"/><path d="M2.500 18.500 l3.400 -3.400" stroke="#2fc02f" stroke-width="1.600" fill="none"/><path d="M1.500 19.500 h3.600 l-3.600 -3.600 z" fill="#2fc02f" stroke="#1f8f1f" stroke-width="0.300"/><path d="M19 18.500 l-3.400 -3.400" stroke="#2fc02f" stroke-width="1.600" fill="none"/><path d="M20 19.500 h-3.600 l3.600 -3.600 z" fill="#2fc02f" stroke="#1f8f1f" stroke-width="0.300"/><rect x="5" y="6" width="12.500" height="10" fill="url(#gBlueV)" stroke="#555" stroke-width="1.300"/></svg>
<svg style="left:33px;top:159px" width="22" height="22" viewBox="0 0 22 22"><path d="M8 3 a4 4.500 0 1 0 0 8 q4 0 7 -2 a4 4.500 0 1 1 -3 8.500" fill="none" stroke="#2f6fe0" stroke-width="1.700"/><path d="M5.69437 13.2358 L14.9253 2.63732 L17.7908 5.13309 L8.55988 15.7316 L5.69437 13.2358 Z" fill="url(#gPencil)" stroke="#6b4308" stroke-width="0.5"/><path d="M4.500 17.500 L5.69437 13.2358 L8.55988 15.7316 Z" fill="#f3dcb0" stroke="#6b4308" stroke-width="0.4"/><path d="M4.500 17.500 L4.95731 15.9091 L6.01303 16.8286 Z" fill="#222"/><path d="M14.9253 2.63732 L16.5672 0.752117 L19.4328 3.24788 L17.7908 5.13309 Z" fill="#e03030"/><path d="M15.500 0 h5.600 l-2.800 3z" fill="#000"/></svg>
<svg style="left:7px;top:185px" width="22" height="22" viewBox="0 0 22 22"><g transform="translate(10.5 9.5) scale(0.9)"><path d="M0 3 l6 -3 l6 3 l-6 3z" fill="#e4e4e4" stroke="#333" stroke-width="0.5"/><path d="M0 3 l6 3 v7 l-6 -3z" fill="#8f8f8f" stroke="#333" stroke-width="0.5"/><path d="M12 3 l-6 3 v7 l6 -3z" fill="#5f5f5f" stroke="#333" stroke-width="0.5"/></g><path d="M7.600 11.900 l-4.55 4.55" stroke="#8d8d8d" stroke-width="3.2" stroke-linecap="round"/><path d="M7.600 11.900 l-4.55 4.55" stroke="#dcdcdc" stroke-width="1.4" stroke-linecap="round"/><circle cx="11.500" cy="8" r="5.200" fill="url(#gLens)" stroke="#5f8ac4" stroke-width="1.4"/><circle cx="11.500" cy="8" r="6.200" fill="none" stroke="#d6e2f2" stroke-width="0.7"/><path d="M2.500 2 v3.600 M0.700 3.800 h3.600 M0.700 7 h3.600" stroke="#000" stroke-width="0.9"/><path d="M10 5.500 l4 2.500 l-4 2.500z" fill="#9fb6d8" stroke="#5f7fae" stroke-width="0.4"/><path d="M15.500 0 h5.600 l-2.800 3z" fill="#000"/></svg>
<svg style="left:33px;top:185px" width="22" height="22" viewBox="0 0 22 22"><path d="M2 3 h14 v5 h-3 v4 h2 v6 h-13z" fill="none" stroke="#f4f000" stroke-width="1.800"/><path d="M2 3 h14 v5 h-3 v4 h2 v6 h-13z" fill="none" stroke="#b8b400" stroke-width="0.4" transform="translate(0.900 0.900)"/><path d="M4.500 10 l3.500 5.500 l7 -10" fill="none" stroke="#3fc03f" stroke-width="3" stroke-linejoin="round"/><path d="M15.500 0 h5.600 l-2.800 3z" fill="#000"/></svg>
<svg style="left:7px;top:211px" width="22" height="22" viewBox="0 0 22 22"><g transform="translate(1 1) scale(1)"><path d="M1 12 l9 -5.500 l9 5 l-9 6.500z" fill="#e6ecf8" stroke="#b9c3da" stroke-width="0.5"/><path d="M6 14 L15 7.800" stroke="#2fbf2f" stroke-width="1.800"/><path d="M12.600 7.200 l4.400 -0.800 l-1.600 4z" fill="#2fbf2f"/><path d="M6 14 L12.500 18" stroke="#e02020" stroke-width="1.800"/><path d="M10.400 19.200 l4.600 0.300 l-2.200 -4z" fill="#e02020"/><path d="M6 14 V4" stroke="#1f6fe8" stroke-width="1.800"/><path d="M3.600 5.200 l2.400 -4.400 l2.400 4.400z" fill="#1f6fe8"/><circle cx="6" cy="14" r="1.900" fill="#e6e6e6" stroke="#777" stroke-width="0.5"/></g><path d="M15.500 0 h5.600 l-2.800 3z" fill="#000"/></svg>
<svg style="left:33px;top:211px" width="22" height="22" viewBox="0 0 22 22"><path d="M2.500 11 q2 -12 6 0 t6.500 4 q2 0 3 -6" fill="none" stroke="#2f6fe0" stroke-width="1.700"/><path d="M5.69437 13.2358 L14.9253 2.63732 L17.7908 5.13309 L8.55988 15.7316 L5.69437 13.2358 Z" fill="url(#gPencil)" stroke="#6b4308" stroke-width="0.5"/><path d="M4.500 17.500 L5.69437 13.2358 L8.55988 15.7316 Z" fill="#f3dcb0" stroke="#6b4308" stroke-width="0.4"/><path d="M4.500 17.500 L4.95731 15.9091 L6.01303 16.8286 Z" fill="#222"/><path d="M14.9253 2.63732 L16.5672 0.752117 L19.4328 3.24788 L17.7908 5.13309 Z" fill="#e03030"/><path d="M15.500 0 h5.600 l-2.800 3z" fill="#000"/></svg>
<svg style="left:7px;top:237px" width="22" height="22" viewBox="0 0 22 22"><path d="M1.500 3 l9 0 l2.500 2 l-9.500 0.500z" fill="#8f9cf0"/><path d="M2 5.500 l10 -0.500 l1 2.400 l-10.500 0.800z" fill="#e8e8f0" stroke="#999" stroke-width="0.400"/><path d="M2.500 8.500 l10 -0.800 l0.500 2.400 l-10 1z" fill="#d0d0d8" stroke="#999" stroke-width="0.400"/><ellipse cx="11" cy="15.500" rx="7" ry="4.600" fill="#b08a72" stroke="#6a4a3a" stroke-width="0.600"/><circle cx="14.300" cy="13.600" r="1.700" fill="#e02020"/><circle cx="12.900" cy="16.800" r="1.700" fill="#20c020"/><circle cx="8.700" cy="17" r="1.700" fill="#2040f0"/><path d="M9.500 13.500 L16.500 3" stroke="#b8641a" stroke-width="1.600"/><path d="M15.500 0 h5.600 l-2.800 3z" fill="#000"/></svg>
<svg style="left:33px;top:237px" width="22" height="22" viewBox="0 0 22 22"><path d="M7 3.500 L19.500 1.500 L15 16.500 L2 19Z" fill="#8fb8f8" stroke="#2f5fd8" stroke-width="1.300"/><path d="M13.200 2.600 L8.500 17.800 M5 10.800 L17.500 8.500" stroke="#e8f0ff" stroke-width="1.300"/><ellipse cx="14" cy="19" rx="6" ry="1.200" fill="#000" opacity="0.3"/><path d="M15.500 0 h5.600 l-2.800 3z" fill="#000"/></svg>
<svg style="left:7px;top:263px" width="22" height="22" viewBox="0 0 22 22"><path d="M3 11 a8 7.200 0 0 1 14.500 -2 l2 -2.600 l1.200 8.400 l-8 -2 l2.200 -1.800 a4.800 4.400 0 0 0 -10.500 2 z" fill="#6ea3e6" stroke="#3f72c0" stroke-width="0.6"/><path d="M19 13 a8 7.200 0 0 1 -14.500 2 l-2 2.600 l-1.200 -8.400 l8 2 l-2.200 1.800 a4.800 4.400 0 0 0 10.500 -2 z" fill="#6ea3e6" stroke="#3f72c0" stroke-width="0.6"/><path d="M15.500 0 h5.600 l-2.800 3z" fill="#000"/></svg>
<svg style="left:33px;top:263px" width="22" height="22" viewBox="0 0 22 22"><ellipse cx="13" cy="19" rx="7" ry="1.400" fill="#000" opacity="0.35"/><g transform="translate(3 3) scale(1.3)"><path d="M0 3 l6 -3 l6 3 l-6 3z" fill="#e6e6e0" stroke="#444" stroke-width="0.5"/><path d="M0 3 l6 3 v7 l-6 -3z" fill="#8a8a86" stroke="#444" stroke-width="0.5"/><path d="M12 3 l-6 3 v7 l6 -3z" fill="#5a5a58" stroke="#444" stroke-width="0.5"/></g><path d="M15.500 0 h5.600 l-2.800 3z" fill="#000"/></svg>
<svg style="left:7px;top:289px" width="22" height="22" viewBox="0 0 22 22"><ellipse cx="11" cy="19" rx="6" ry="1.300" fill="#000" opacity="0.3"/><path d="M6 7.500 q0 -4.500 5 -4.500 q5 0 5 4 q0 2.500 -3 4.500 q-1.500 1 -1.500 3" fill="none" stroke="#3f6fc0" stroke-width="2.800"/><path d="M6 7.500 q0 -4.500 5 -4.500 q5 0 5 4 q0 2.500 -3 4.500 q-1.500 1 -1.500 3" fill="none" stroke="#8fb4ec" stroke-width="1"/><circle cx="11.300" cy="17.500" r="1.600" fill="#6f9ae0" stroke="#3f6fc0" stroke-width="0.700"/><path d="M15.500 0 h5.600 l-2.800 3z" fill="#000"/></svg>
<svg style="left:33px;top:289px" width="22" height="22" viewBox="0 0 22 22"><path d="M3.500 3.500 v15 M18.500 3.500 v15" stroke="#555" stroke-width="1.300"/><path d="M4.500 6 h13" stroke="#e8e000" stroke-width="1.600"/><path d="M3.800 6 l3.400 -2.400 v4.800z M19.200 6 l-3.400 -2.400 v4.800z" fill="#e8e000" stroke="#a8a000" stroke-width="0.400"/><path d="M15.500 0 h5.600 l-2.800 3z" fill="#000"/></svg>
<svg style="left:7px;top:315px" width="22" height="22" viewBox="0 0 22 22"><ellipse cx="13" cy="19.500" rx="6" ry="1.200" fill="#000" opacity="0.3"/><path d="M4 6 h14 l-1.800 13 h-10.400z" fill="#a8d0f0" stroke="#4a7ab0" stroke-width="0.900"/><ellipse cx="11" cy="6" rx="7.500" ry="2" fill="#cfe6f8" stroke="#4a7ab0" stroke-width="0.900"/><path d="M8 10 l6 7 M14 10 l-6 7" stroke="#e8f060" stroke-width="1.600"/><path d="M9 5.500 l2 -3.500 l2 3.500z" fill="#f0e020" stroke="#a89a00" stroke-width="0.400"/><path d="M15.500 0 h5.600 l-2.800 3z" fill="#000"/></svg>
<svg style="left:33px;top:315px" width="22" height="22" viewBox="0 0 22 22"><ellipse cx="11" cy="19" rx="7" ry="1.300" fill="#000" opacity="0.3"/><g transform="translate(2.5 2.5) scale(1 1)"><path d="M0 6.500 L8 0 L8 4 Q16 4.500 15.500 12 Q15 16 10.500 17 Q13 13.500 11.500 11 Q10.500 9 8 9 L8 13Z" fill="url(#gGray)" stroke="#7a7a7a" stroke-width="0.6"/></g><path d="M15.500 0 h5.600 l-2.800 3z" fill="#000"/></svg>
<svg style="left:7px;top:341px" width="22" height="22" viewBox="0 0 22 22"><rect x="1.500" y="1" width="1.600" height="13" fill="#333"/><rect x="3.600" y="1" width="1.600" height="13" fill="#6f8fb0"/><path d="M2 14 l2 4 l2 -4" fill="#e8a020"/><circle cx="12.500" cy="10.500" r="5.600" fill="none" stroke="#8a3a1a" stroke-width="1.200"/><path d="M12.500 3 v15 M5 10.500 h15 M7.200 5.200 l10.600 10.600 M17.800 5.200 l-10.600 10.600" stroke="#8a3a1a" stroke-width="1"/><circle cx="12.500" cy="10.500" r="1.800" fill="#f0c020"/><path d="M2 18 l6 -3 l12 1.500 l-6 4.500z" fill="#f88a10"/><path d="M6 17 l8 1 M5 19 l8 1" stroke="#ffd8a0" stroke-width="0.800"/><path d="M15.500 0 h5.600 l-2.800 3z" fill="#000"/></svg>
<svg style="left:33px;top:341px" width="22" height="22" viewBox="0 0 22 22"><path d="M5 10 h10 l4 4 v7 h-14z" fill="url(#gBlueV)" stroke="#000" stroke-width="1.200"/><rect x="7" y="17" width="5" height="2.600" fill="#fff" stroke="#333" stroke-width="0.500"/><g transform="translate(0.5 0.5) scale(0.9)"><path d="M0.500 3 l5.500 -1.600 l1.400 1.600 l7 -1.200 l1 11 l-13.500 3z" fill="#f2c75a" stroke="#c9962a" stroke-width="0.6"/><path d="M1.500 16 l3 -8.500 l13.500 -2.800 l-3.400 9z" fill="url(#gFold)" stroke="#c9962a" stroke-width="0.6"/></g><g transform="translate(6.5 1.5) scale(0.8)"><path d="M0 7 q1 -6.500 8 -5.500 l0 -2.200 l5 4.200 l-5 4.200 l0 -2.400 q-4.500 -0.800 -5.500 3z" fill="#2db82d" stroke="#157a15" stroke-width="0.5"/></g></svg>
<svg style="left:64px;top:113px" width="24" height="24" viewBox="0 0 24 24"><rect x="4" y="4.400" width="16" height="3.600" rx="1" fill="#3f5a8a"/><path d="M5 5.300 h14" stroke="#6f88b0" stroke-width="0.600"/><rect x="4" y="10.400" width="16" height="3.600" rx="1" fill="#3f5a8a"/><path d="M5 11.300 h14" stroke="#6f88b0" stroke-width="0.600"/><rect x="4" y="16.400" width="16" height="3.600" rx="1" fill="#3f5a8a"/><path d="M5 17.300 h14" stroke="#6f88b0" stroke-width="0.600"/></svg>
<svg style="left:92px;top:113px" width="24" height="24" viewBox="0 0 24 24"><path d="M4 4.500 l3.400 3.400" stroke="#2fc02f" stroke-width="1.600" fill="none"/><path d="M3 3.500 h3.600 l-3.600 3.600 z" fill="#2fc02f" stroke="#1f8f1f" stroke-width="0.300"/><path d="M20 4.500 l-3.400 3.400" stroke="#2fc02f" stroke-width="1.600" fill="none"/><path d="M21 3.500 h-3.600 l3.600 3.600 z" fill="#2fc02f" stroke="#1f8f1f" stroke-width="0.300"/><path d="M4 19.500 l3.400 -3.400" stroke="#2fc02f" stroke-width="1.600" fill="none"/><path d="M3 20.500 h3.600 l-3.600 -3.600 z" fill="#2fc02f" stroke="#1f8f1f" stroke-width="0.300"/><path d="M20 19.500 l-3.400 -3.400" stroke="#2fc02f" stroke-width="1.600" fill="none"/><path d="M21 20.500 h-3.600 l3.600 -3.600 z" fill="#2fc02f" stroke="#1f8f1f" stroke-width="0.300"/><rect x="7" y="7.500" width="10.500" height="9.500" fill="url(#gBlueV)" stroke="#e8e8e8" stroke-width="0.600"/></svg>
<svg style="left:120px;top:113px" width="24" height="24" viewBox="0 0 24 24"><path d="M4 7 q3 -3 6 -1 M3.500 10.500 q3 -3 6 -1 M4 14 q3 -2 5 -1" stroke="#c5d6ee" stroke-width="1.600" fill="none"/><path d="M9.95 15.05 l-4.55 4.55" stroke="#8d8d8d" stroke-width="3.2" stroke-linecap="round"/><path d="M9.95 15.05 l-4.55 4.55" stroke="#dcdcdc" stroke-width="1.4" stroke-linecap="round"/><circle cx="14" cy="11" r="5.400" fill="url(#gLens)" stroke="#5f8ac4" stroke-width="1.4"/><circle cx="14" cy="11" r="6.400" fill="none" stroke="#d6e2f2" stroke-width="0.7"/></svg>
<svg style="left:148px;top:113px" width="24" height="24" viewBox="0 0 24 24"><path d="M2 15 l9 -5.500 l9 5 l-9 6.500z" fill="none" stroke="#5a5a6a" stroke-width="0.700"/><g transform="translate(4 2) scale(0.95)"><path d="M6 14 L15 7.800" stroke="#2fbf2f" stroke-width="1.800"/><path d="M12.600 7.200 l4.400 -0.800 l-1.600 4z" fill="#2fbf2f"/><path d="M6 14 L12.500 18" stroke="#e02020" stroke-width="1.800"/><path d="M10.400 19.200 l4.600 0.300 l-2.200 -4z" fill="#e02020"/><path d="M6 14 V4" stroke="#1f6fe8" stroke-width="1.800"/><path d="M3.600 5.200 l2.400 -4.400 l2.400 4.400z" fill="#1f6fe8"/><circle cx="6" cy="14" r="1.900" fill="#e6e6e6" stroke="#777" stroke-width="0.5"/></g></svg>
<svg style="left:176px;top:113px" width="24" height="24" viewBox="0 0 24 24"><path d="M12.500 2.500 V13 L3.500 17 M12.500 13 L21.500 17" fill="none" stroke="#0a0a0a" stroke-width="1.300" stroke-linejoin="round"/><path d="M12.500 2.500 L21.500 7 L12.500 11.500 L3.500 7 Z" fill="url(#gGrnBtn)"/><path d="M12.500 2.500 L21.500 7 V17 L12.500 22 L3.500 17 V7Z M3.500 7 L12.500 11.500 L21.500 7 M12.500 11.500 V22" fill="none" stroke="#0a0a0a" stroke-width="1.400" stroke-linejoin="round"/></svg>
<svg style="left:204px;top:113px" width="24" height="24" viewBox="0 0 24 24"><path d="M12.500 2.500 V13 L3.500 17 M12.500 13 L21.500 17" fill="none" stroke="#0a0a0a" stroke-width="1.300" stroke-linejoin="round"/><path d="M12.500 13 L21.500 17 L12.500 22 L3.500 17 Z" fill="url(#gGrnBtn)"/><path d="M12.500 2.500 L21.500 7 V17 L12.500 22 L3.500 17 V7Z M3.500 7 L12.500 11.500 L21.500 7 M12.500 11.500 V22" fill="none" stroke="#0a0a0a" stroke-width="1.400" stroke-linejoin="round"/></svg>
<svg style="left:232px;top:113px" width="24" height="24" viewBox="0 0 24 24"><path d="M3.500 7 L12.500 2.500 L12.500 13 L3.500 17 Z" fill="url(#gGrnBtn)"/><path d="M12.500 2.500 V13 L3.500 17 M12.500 13 L21.500 17" fill="none" stroke="#0a0a0a" stroke-width="1.300" stroke-linejoin="round"/><path d="M12.500 2.500 L21.500 7 V17 L12.500 22 L3.500 17 V7Z M3.500 7 L12.500 11.500 L21.500 7 M12.500 11.500 V22" fill="none" stroke="#0a0a0a" stroke-width="1.400" stroke-linejoin="round"/></svg>
<svg style="left:260px;top:113px" width="24" height="24" viewBox="0 0 24 24"><path d="M12.500 2.500 V13 L3.500 17 M12.500 13 L21.500 17" fill="none" stroke="#0a0a0a" stroke-width="1.300" stroke-linejoin="round"/><path d="M12.500 11.500 L21.500 7 L21.500 17 L12.500 22 Z" fill="url(#gGrnBtn)"/><path d="M12.500 2.500 L21.500 7 V17 L12.500 22 L3.500 17 V7Z M3.500 7 L12.500 11.500 L21.500 7 M12.500 11.500 V22" fill="none" stroke="#0a0a0a" stroke-width="1.400" stroke-linejoin="round"/></svg>
<svg style="left:288px;top:113px" width="24" height="24" viewBox="0 0 24 24"><path d="M12.500 2.500 V13 L3.500 17 M12.500 13 L21.500 17" fill="none" stroke="#0a0a0a" stroke-width="1.300" stroke-linejoin="round"/><path d="M3.500 7 L12.500 11.500 L12.500 22 L3.500 17 Z" fill="url(#gGrnBtn)"/><path d="M12.500 2.500 L21.500 7 V17 L12.500 22 L3.500 17 V7Z M3.500 7 L12.500 11.500 L21.500 7 M12.500 11.500 V22" fill="none" stroke="#0a0a0a" stroke-width="1.400" stroke-linejoin="round"/></svg>
<svg style="left:316px;top:113px" width="24" height="24" viewBox="0 0 24 24"><path d="M12.500 2.500 L21.500 7 L21.500 17 L12.500 13 Z" fill="url(#gGrnBtn)"/><path d="M12.500 2.500 V13 L3.500 17 M12.500 13 L21.500 17" fill="none" stroke="#0a0a0a" stroke-width="1.300" stroke-linejoin="round"/><path d="M12.500 2.500 L21.500 7 V17 L12.500 22 L3.500 17 V7Z M3.500 7 L12.500 11.500 L21.500 7 M12.500 11.500 V22" fill="none" stroke="#0a0a0a" stroke-width="1.400" stroke-linejoin="round"/></svg>
<svg style="left:344px;top:113px" width="24" height="24" viewBox="0 0 24 24"><path d="M12.500 2.500 L21.500 7 L12.500 11.500 L3.500 7 Z" fill="#5fe83f"/><path d="M3.500 7 L12.500 11.500 L12.500 22 L3.500 17 Z" fill="#2fb82a"/><path d="M12.500 11.500 L21.500 7 L21.500 17 L12.500 22 Z" fill="#1f981f"/><path d="M12.500 2.500 L21.500 7 V17 L12.500 22 L3.500 17 V7Z M3.500 7 L12.500 11.500 L21.500 7 M12.500 11.500 V22" fill="none" stroke="#1a7a1a" stroke-width="0.700"/></svg>
<svg style="left:64px;top:141px" width="24" height="24" viewBox="0 0 24 24"><path d="M6.500 6.600 v10.800 a5.500 2.600 0 0 0 11 0 v-10.800" fill="none" stroke="#1a1a1a" stroke-width="1"/><ellipse cx="12" cy="6.600" rx="5.500" ry="2.600" fill="none" stroke="#1a1a1a" stroke-width="1"/><path d="M6.500 17.400 a5.500 2.600 0 0 1 11 0" fill="none" stroke="#1a1a1a" stroke-width="0.700"/></svg>
<svg style="left:64px;top:169px" width="24" height="24" viewBox="0 0 24 24"><path d="M6.500 6.600 v10.800 a5.500 2.600 0 0 0 11 0 v-10.800" fill="none" stroke="#1a1a1a" stroke-width="1"/><ellipse cx="12" cy="6.600" rx="5.500" ry="2.600" fill="none" stroke="#1a1a1a" stroke-width="1"/></svg>
<svg style="left:64px;top:197px" width="24" height="24" viewBox="0 0 24 24"><ellipse cx="14.500" cy="20" rx="5.500" ry="1.300" fill="#000" opacity="0.4"/><path d="M6.500 6.600 v10.800 a5.500 2.600 0 0 0 11 0 v-10.800" fill="url(#gCylB)" stroke="#16223f" stroke-width="0.9"/><ellipse cx="12" cy="6.600" rx="5.500" ry="2.600" fill="#6f98df" stroke="#16223f" stroke-width="0.9"/></svg>
<svg style="left:64px;top:225px" width="24" height="24" viewBox="0 0 24 24"><ellipse cx="14.500" cy="20" rx="5.500" ry="1.300" fill="#000" opacity="0.3"/><path d="M6.500 6.600 v10.800 a5.500 2.600 0 0 0 11 0 v-10.800" fill="url(#gCylL)" stroke="#3a3a4a" stroke-width="0.9"/><ellipse cx="12" cy="6.600" rx="5.500" ry="2.600" fill="#eef2fb" stroke="#3a3a4a" stroke-width="0.9"/></svg>
<svg style="left:64px;top:253px" width="24" height="24" viewBox="0 0 24 24"><path d="M6.500 6.600 v10.800 a5.500 2.600 0 0 0 11 0 v-10.800" fill="#8a8c98" stroke="#1a1a1a" stroke-width="0.9"/><ellipse cx="12" cy="6.600" rx="5.500" ry="2.600" fill="#8a8c98" stroke="#1a1a1a" stroke-width="0.9"/><path d="M8 7 l3 12 M11 7 l-2 12 M12 7 l3 12 M16 7 l-3 12" stroke="#1a1a1a" stroke-width="0.600" fill="none"/></svg>
<svg id="triad" style="left:0;top:0" width="400" height="1048" viewBox="0 0 400 1048">
<g fill="none" stroke="#b9bec9" stroke-width="0.9"><path d="M109 923 l8 -5.500 h5 M109 923 v22 l10 4.500 h16 l9.500 -7 M109 945 l11 -3"/></g>
<path d="M122 917.300 L144.400 920 L144.400 942.300 L122 942Z" fill="#7c8d5c"/>
<path d="M122 917.300 L144.400 920 L144.400 942.300" fill="none" stroke="#f1e800" stroke-width="1.200"/>
<path d="M120.400 942 L92 952.300" stroke="#0a9aa4" stroke-width="2.600"/>
<circle cx="90.800" cy="952.800" r="4.200" fill="#1fd6e0"/><circle cx="89.800" cy="951.800" r="1.600" fill="#8ff2f6"/>
<path d="M120.400 942 L144 945.500" stroke="#e01515" stroke-width="2.400"/>
<path d="M141.500 941.200 L151.500 945.800 L141.800 949.800Z" fill="#d00f0f"/>
<path d="M120.800 942 L121.800 902" stroke="#12c012" stroke-width="3"/>
<path d="M117.600 903.800 L122 892.500 L126.600 903.800Z" fill="#20d820"/>
<circle cx="120.400" cy="942" r="3.600" fill="#8a8a8a"/><circle cx="119.600" cy="941" r="1.400" fill="#bdbdbd"/>
<g font-family="Liberation Sans, sans-serif" font-size="11.500" fill="#d6d6d6"><text x="117.800" y="891">Y</text><text x="153.200" y="951.600">X</text><text x="78.800" y="959.800">Z</text></g>
</svg>

<svg id="dora" style="left:0;top:0" width="1920" height="1048" viewBox="0 0 1920 1048">
<defs>
<linearGradient id="ringG" gradientUnits="userSpaceOnUse" x1="1790" y1="866" x2="1838" y2="902"><stop offset="0" stop-color="#f0605a"/><stop offset="0.45" stop-color="#f0c040"/><stop offset="1" stop-color="#4fd080"/></linearGradient>
<clipPath id="cpDoraBody"><rect x="1700" y="780" width="220" height="86"/></clipPath>
</defs>
<!-- speed monitor -->
<rect x="1826" y="864.500" width="77" height="39.500" rx="19.700" fill="#232a3b"/>
<path d="M1842 883.500 h58" stroke="#30384b" stroke-width="1"/>
<circle cx="1813.800" cy="884.400" r="29.500" fill="#2e3650"/>
<circle cx="1813.800" cy="884.400" r="27.600" fill="#343d58"/>
<circle cx="1813.800" cy="884.400" r="25.600" fill="none" stroke="url(#ringG)" stroke-width="1.400"/>
<g font-family="Liberation Sans, sans-serif" fill="#e4e7ee">
<text x="1797.500" y="891" font-size="24.500" textLength="24.500" lengthAdjust="spacingAndGlyphs" style="font-weight:normal">91</text>
<text x="1824" y="891" font-size="9.500">%</text>
<text x="1871.600" y="876.300" font-size="11.500" font-weight="bold">0</text><text x="1879.300" y="876.300" font-size="10" fill="#b9bfcc">K/s</text>
<text x="1862.500" y="898" font-size="11.500" font-weight="bold">0.2</text><text x="1879.300" y="898" font-size="10" fill="#b9bfcc">K/s</text>
</g>
<path d="M1849.600 875 v-5.500 M1846.400 872.800 l3.200 -3.300 l3.200 3.300" fill="none" stroke="#49aef2" stroke-width="1.400"/>
<path d="M1849.600 890.500 v5.500 M1846.400 892.700 l3.200 3.300 l3.200 -3.300" fill="none" stroke="#1faf43" stroke-width="1.400"/>
<!-- IME bar -->
<defs><linearGradient id="gIme" x1="0" y1="0" x2="0" y2="1"><stop offset="0" stop-color="#d2e8f5"/><stop offset="0.075" stop-color="#3a96cf"/><stop offset="0.13" stop-color="#c4e0f1"/><stop offset="0.88" stop-color="#c4e0f1"/><stop offset="0.925" stop-color="#3a96cf"/><stop offset="1" stop-color="#d2e8f5"/></linearGradient></defs>
<rect x="1748" y="793.600" width="156.500" height="71" rx="10" fill="url(#gIme)" fill-opacity="0.940"/>
<rect x="1731.800" y="800.300" width="170" height="57.500" rx="8" fill="#fff" stroke="#1b7fc2" stroke-width="2"/>
<g fill="#000">
<text x="1741.3" y="827.6" font-family="Liberation Sans, Noto Sans CJK SC, sans-serif" font-size="22.500" font-weight="bold" fill="#000">中</text>
<path d="M1781.230 810.910 A8.100 8.100 0 1 1 1774.370 822.660 A6.900 6.900 0 0 0 1781.230 810.910Z"/>
<path d="M1745.300 838.500 l1.600 0.300 l-1.300 3.600 l-0.900 -0.200z"/>
<path d="M1771.600 839.500 l5 -1.800 q5 2.200 10 0 l5 1.800 l0 5.200 l-4.200 -0.600 l0 8.900 h-11.600 v-8.900 l-4.200 0.600z"/>
</g>
<circle cx="1756.600" cy="850.300" r="2" fill="none" stroke="#000" stroke-width="1.100"/>
<!-- doraemon -->
<g stroke="#1a5f8a" stroke-width="0.400">
<ellipse cx="1907" cy="851.500" rx="9.900" ry="11.800" transform="rotate(-28 1907 851.500)" fill="#fbfbfb" stroke="#b9b9b9" stroke-width="0.500"/>
<path d="M1868 840 Q1873 822 1884 824.500 Q1896 829 1898.500 845 Q1900 858 1897 862 Q1880 866 1862 864Z" fill="#0a93dc"/>
<ellipse cx="1852" cy="857.500" rx="15.500" ry="9.800" fill="#0a93dc"/>
<ellipse cx="1820" cy="851.500" rx="12.500" ry="6.500" transform="rotate(8 1820 851.500)" fill="#0a93dc"/>
<circle cx="1841.400" cy="826.200" r="33.500" fill="#0a93dc"/>
</g>
<circle cx="1893.500" cy="822.500" r="4.700" fill="#e60012"/>
<path d="M1824 851 q4 4 9 5.500 l0.500 -2 q-4 -2 -7 -5z M1862 850 q6 -6 8 -11 l1.500 1 q-2 6 -8 12z" fill="#d80f18"/>
<ellipse cx="1836.200" cy="826.800" rx="29.800" ry="25" transform="rotate(-10 1836.200 826.800)" fill="#fdfdfd" stroke="#8f8580" stroke-width="0.500"/>
<ellipse cx="1835.400" cy="803.500" rx="7.700" ry="8.200" transform="rotate(10 1835.400 803.500)" fill="#fff" stroke="#8a7f7a" stroke-width="0.600"/>
<ellipse cx="1848.700" cy="809.900" rx="8.600" ry="9.400" transform="rotate(14 1848.700 809.900)" fill="#fff" stroke="#8a7f7a" stroke-width="0.600"/>
<path d="M1833 805.200 q2.500 4 7.500 1.500" fill="none" stroke="#151515" stroke-width="1.100"/>
<ellipse cx="1844.400" cy="810" rx="1.900" ry="2.800" transform="rotate(14 1844.400 810)" fill="#111"/><ellipse cx="1844.200" cy="810.200" rx="0.700" ry="1.300" transform="rotate(14 1844.200 810.200)" fill="#fff"/>
<circle cx="1834.700" cy="814.400" r="4.500" fill="#e60012"/><circle cx="1836.400" cy="813.600" r="1.500" fill="#fff"/>
<g fill="none" stroke="#6f6560" stroke-width="0.600">
<path d="M1832 819.500 Q1827.500 829 1825 835.500"/>
<path d="M1809.200 828 Q1830 849 1861 831.500"/>
<path d="M1810 810.500 l13 8 M1808.500 816.500 l14 5 M1808 821.500 l14 2.500"/>
<path d="M1841.500 823.200 l19.500 -0.400 M1840.500 826.600 l20 5.600 M1840 830 l16 11.200"/>
</g>
<circle cx="1812.200" cy="840" r="5.800" fill="#fdfdfd" stroke="#8f8580" stroke-width="0.500"/>
<ellipse cx="1848.200" cy="853.300" rx="8.600" ry="7.300" fill="#fdfdfd" stroke="#8f8580" stroke-width="0.500"/>
<circle cx="1833" cy="859.300" r="4.800" fill="#e8c821" stroke="#8a7000" stroke-width="0.600"/><path d="M1828.400 857.600 q4.600 -1.500 9.200 0" stroke="#8a7000" stroke-width="0.700" fill="none"/><circle cx="1832.200" cy="860.300" r="1.300" fill="#5a3a6a"/>
</svg>

<div class="a" style="left:0;top:1001px;width:1920px;height:39px;background:#d6dbe9"></div>
<div class="a" style="left:2px;top:1020px;width:1918px;height:1px;background:#9a9a9a"></div>
<div class="a" style="left:2px;top:1021px;width:1918px;height:1px;background:#f4f6fa"></div>
<div class="grip2" style="left:1338px;top:1003px;height:16px"></div>
<div class="a" style="left:1342px;top:1003px;width:130px;height:16px;background:#fff"></div>
<svg style="left:1458px;top:1004px" width="13" height="13" viewBox="0 0 13 13"><circle cx="8" cy="5" r="3.500" fill="#eaf2fb" stroke="#4a6a9a" stroke-width="1.200"/><path d="M5.500 7.500L1.500 11.500" stroke="#4a6a9a" stroke-width="1.600"/></svg>
<div class="grip2" style="left:1478px;top:1003px;height:16px"></div>
<div class="t" style="left:1486px;top:1005px"><span class="k" style="width:24px;height:14px">绝对</span> XY <span class="k" style="width:36px;height:14px">上视图</span></div>
<div class="sep" style="left:1591px;top:1003px;height:15px"></div>
<div class="t" style="left:1600px;top:1005px"><span class="k" style="width:48px;height:14px">绝对视图</span></div>
<div class="grip2" style="left:1657px;top:1003px;height:16px"></div>
<div class="t" style="left:1668px;top:1005px;font-weight:bold;font-size:12px">LAYER0</div>
<div class="sep" style="left:1726px;top:1003px;height:15px"></div>
<div class="a" style="left:1761px;top:1006px;width:33px;height:11px;background:#3e5b8d"></div>
<div class="a" style="left:1805px;top:1006px;width:33px;height:11px;background:#3e5b8d"></div>
<div class="a" style="left:1848px;top:1006px;width:33px;height:11px;background:#3e5b8d"></div>
<div class="sep" style="left:1757px;top:1003px;height:15px"></div>
<div class="sep" style="left:1800px;top:1003px;height:15px"></div>
<div class="sep" style="left:1843px;top:1003px;height:15px"></div>
<div class="sep" style="left:1886px;top:1003px;height:15px"></div>
<div class="sep" style="left:1133px;top:1024px;height:14px"></div>
<div class="sep" style="left:1175px;top:1024px;height:14px"></div>
<div class="sep" style="left:1206px;top:1024px;height:14px"></div>
<div class="sep" style="left:1237px;top:1024px;height:14px"></div>
<div class="sep" style="left:1269px;top:1024px;height:14px"></div>
<div class="sep" style="left:1300px;top:1024px;height:14px"></div>
<div class="sep" style="left:1330px;top:1024px;height:14px"></div>
<div class="sep" style="left:1361px;top:1024px;height:14px"></div>
<div class="sep" style="left:1393px;top:1024px;height:14px"></div>
<div class="sep" style="left:1424px;top:1024px;height:14px"></div>
<div class="sep" style="left:1454px;top:1024px;height:14px"></div>
<div class="sep" style="left:1579px;top:1024px;height:14px"></div>
<div class="sep" style="left:1654px;top:1024px;height:14px"></div>
<div class="t" style="left:1141px;top:1025px"><span class="k" style="width:24px;height:14px">拴牢</span></div>
<div class="t" style="left:1463px;top:1025px">LS: 1.00 PS: 1.00</div>
<div class="t" style="left:1589px;top:1025px"><span class="k" style="width:24px;height:14px">单位</span>: <span class="k" style="width:24px;height:14px">毫米</span></div>
<div class="t" id="xyz" style="left:1663px;top:1025px;letter-spacing:0.41px">X = 0543.767 Y = 0521.068 Z = 0000.000</div>
<svg style="left:1181px;top:1022px" width="18" height="17" viewBox="0 0 18 17"><rect x="0.500" y="0.500" width="17" height="16" fill="#c3c8d8" stroke="#737a94" stroke-width="1"/><path d="M2.800 7.500 a6.200 5.580 0 0 1 10.900 -2 l2 -2.600 l1.200 8.400 l-8 -2 l2.200 -1.800 a3.720 3.410 0 0 0 -6.900 2 z" fill="#f4d0d4" stroke="#d83848" stroke-width="0.6"/><path d="M15.200 9.500 a6.200 5.580 0 0 1 -10.900 2 l-2 2.600 l-1.200 -8.400 l8 2 l-2.200 1.800 a3.720 3.410 0 0 0 6.900 -2 z" fill="#f4d0d4" stroke="#d83848" stroke-width="0.6"/></svg>
<svg style="left:1212px;top:1021px" width="18" height="18" viewBox="0 0 18 18"><rect width="18" height="18" fill="#fde07a"/><path d="M2 3 l6 -1 l3 5 l-5 4z" fill="#e850c0"/><path d="M4 2 l3 4 l-5 2z" fill="#f8e020"/><path d="M8 8 l0 7 l2 -1.500 l4 4 l1.500 -1.500 l-4 -4 l2.500 -1.500z" fill="#e6e6ee" stroke="#7a7a9a" stroke-width="0.800"/></svg>
<svg style="left:1245px;top:1022px" width="17" height="17" viewBox="0 0 17 17"><path d="M2 7 l6 -5 l7 2 l-2 4 l-5 1z" fill="#e8b868" stroke="#9a6a20" stroke-width="0.600"/><path d="M4 3 l8 3 M6 2 l-2 4 M9 2.500 l-2 5" stroke="#9a6a20" stroke-width="0.500"/><rect x="2.500" y="8" width="8.500" height="8" fill="#dfe8f8" stroke="#4a6aa8" stroke-width="0.800"/><path d="M4 10 h2 M4 13 h2 M7.500 11 h2 M7.500 14 h2" stroke="#2f6fe0" stroke-width="1.300"/></svg>
<svg style="left:1275px;top:1022px" width="16" height="17" viewBox="0 0 16 17"><ellipse cx="8" cy="15.500" rx="6" ry="1.200" fill="#000" opacity="0.35"/><path d="M4 5.500 q0 -4 4.500 -4 q4.500 0 4.500 3.600 q0 2.200 -2.700 4 q-1.500 1 -1.500 2.600" fill="none" stroke="#3f6fc0" stroke-width="2.500"/><path d="M4 5.500 q0 -4 4.500 -4 q4.500 0 4.500 3.600 q0 2.200 -2.700 4 q-1.500 1 -1.500 2.600" fill="none" stroke="#8fb4ec" stroke-width="0.900"/><circle cx="8.700" cy="14.300" r="1.400" fill="#6f9ae0" stroke="#3f6fc0" stroke-width="0.600"/></svg>
<svg style="left:1304px;top:1022px" width="20" height="17" viewBox="0 0 20 17"><g transform="translate(2 0.5) scale(0.72)"><path d="M0 3 l6 -3 l6 3 l-6 3z" fill="#7fb0f0" stroke="#1f3f80" stroke-width="0.5"/><path d="M0 3 l6 3 v7 l-6 -3z" fill="#3f7fd8" stroke="#1f3f80" stroke-width="0.5"/><path d="M12 3 l-6 3 v7 l6 -3z" fill="#2f5fb0" stroke="#1f3f80" stroke-width="0.5"/></g><g transform="translate(9.5 6) scale(0.8)"><path d="M0 3 l6 -3 l6 3 l-6 3z" fill="#9ab8c0" stroke="#111" stroke-width="0.5"/><path d="M0 3 l6 3 v7 l-6 -3z" fill="#5a7a84" stroke="#111" stroke-width="0.5"/><path d="M12 3 l-6 3 v7 l6 -3z" fill="#3a5a64" stroke="#111" stroke-width="0.5"/></g><path d="M1 12 h7 M4 8.500 l4 3.500 l-4 3.500" stroke="#f01010" stroke-width="1.600" fill="none"/></svg>
<svg style="left:1336px;top:1021px" width="18" height="18" viewBox="0 0 18 18"><rect width="18" height="18" fill="#fde07a"/><path d="M2 5 l7 -3 l7 3 l-7 3z" fill="#e040e8" stroke="#8020a0" stroke-width="0.500"/><path d="M2 5 l7 3 v8 l-7 -3z" fill="#8fb0a8" stroke="#2f5fd0" stroke-width="1"/><path d="M16 5 l-7 3 v8 l7 -3z" fill="#7fa098" stroke="#2f5fd0" stroke-width="1"/></svg>
<svg style="left:1370px;top:1022px" width="12" height="17" viewBox="0 0 12 17"><rect x="0.800" y="0.800" width="10" height="15.500" fill="#e6e6e6" stroke="#5a6a5a" stroke-width="1.200"/><rect x="1.500" y="5.500" width="8.600" height="3" fill="#f0b040"/><path d="M1.500 5 h8.600 M1.500 9 h8.600 M1.500 12.500 h8.600" stroke="#8a8a8a" stroke-width="0.700"/></svg>
<svg style="left:1398px;top:1021px" width="19" height="19" viewBox="0 0 19 19"><path d="M9.500 4 a6.500 6.500 0 1 1 -6.500 6.500" fill="none" stroke="#1f8f1f" stroke-width="2.200"/><path d="M10.500 0.500 l-5 3.500 l5 3.500z" fill="#1f8f1f"/><path d="M7 10.500 h5 M9.500 8 v5" stroke="#1f2f8a" stroke-width="1.300"/></svg>
<svg style="left:1430px;top:1022px" width="17" height="17" viewBox="0 0 17 17"><rect x="0.800" y="0.800" width="15.400" height="15.400" fill="#dfe3ee" stroke="#6a7088" stroke-width="1.200"/><path d="M8.500 1 v15 M1 8.500 h15" stroke="#1a1a3a" stroke-width="1.700"/></svg>
<svg style="left:1893px;top:1003px" width="15" height="15" viewBox="0 0 15 15"><circle cx="7.500" cy="7.500" r="6.800" fill="#14389a" stroke="#06143c" stroke-width="0.900"/><path d="M2.500 4.500 q2.500 -2.500 5 -1 q-0.500 3 -3.500 4.500 q-2 -0.500 -1.500 -3.500z M8 8.500 q3 -1 4.500 1 q-1 3.500 -3.500 3.500 q-2 -1 -1 -4.500z M10 2.500 q2.500 0.500 3.500 2.500 l-2.500 1z" fill="#2aa838"/><path d="M3 10 q2 3.500 5 4" stroke="#06143c" stroke-width="1" fill="none"/><circle cx="5" cy="4.500" r="1.300" fill="#fff" opacity="0.450"/></svg>
<div class="a" style="left:0;top:1040px;width:1920px;height:8px;background:linear-gradient(to right,#352b24 0,#352b24 345px,#5f574f 345px,#5f574f 389px,#3a3229 389px,#3a3229 392px,#2a231d 392px,#2a231d 394px,#403a2b 394px,#403a2c 60%,#3a3027 75%,#3a3027 100%)"></div>
<div class="t" style="left:1813px;top:1045px;color:#fff;font-size:12px;line-height:12px">15:01</div>
<div class="a" style="left:1914px;top:1040px;width:1px;height:8px;background:#7d766e"></div>
</body></html>
